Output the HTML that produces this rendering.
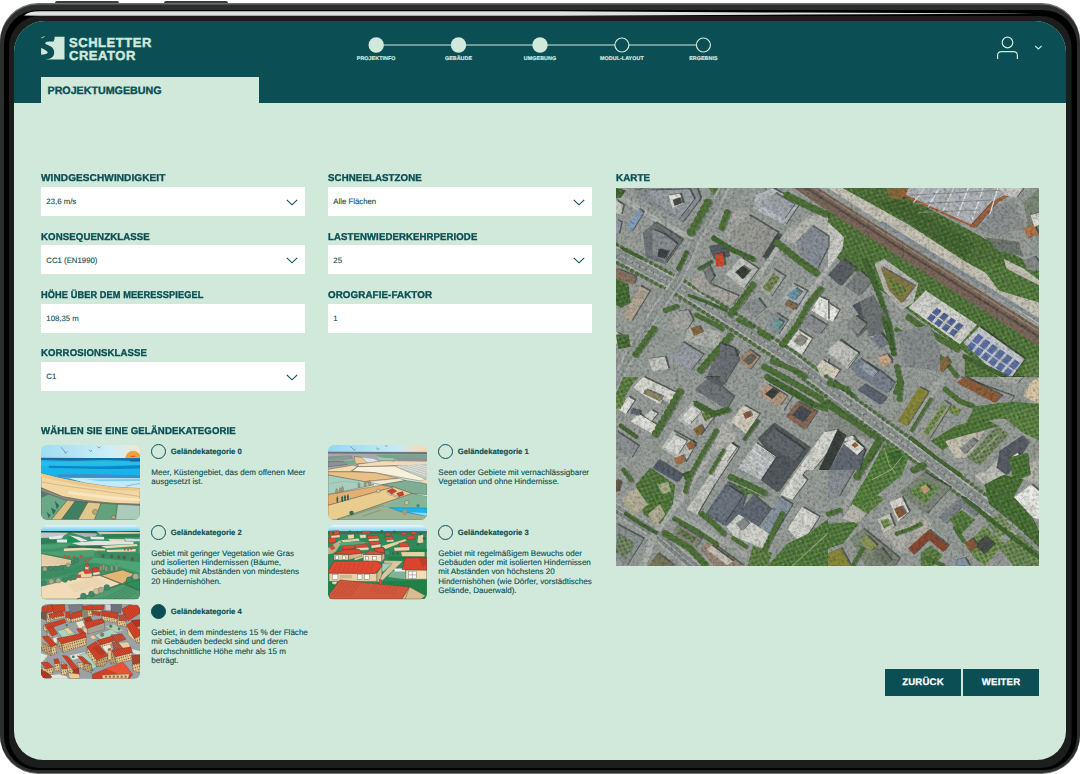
<!DOCTYPE html>
<html lang="de">
<head>
<meta charset="utf-8">
<title>Schletter Creator – Projektumgebung</title>
<style>
html,body{margin:0;padding:0;background:#fff;}
body{width:1080px;height:774px;position:relative;overflow:hidden;font-family:"Liberation Sans",sans-serif;color:#0b4f55;text-rendering:geometricPrecision;}
#frame{position:absolute;left:0;top:0;width:1080px;height:774px;}
#screen{position:absolute;left:14px;top:21px;width:1052px;height:739px;border-radius:31px 31px 29px 29px;background:#d0e9da;overflow:hidden;}
#hdr{position:absolute;left:0;top:0;width:1052px;height:81.7px;background:#0b4f55;}
.abs{position:absolute;white-space:nowrap;}
#tab{position:absolute;left:27px;top:56px;width:218px;height:27px;background:#d0e9da;}
.h{position:absolute;white-space:nowrap;font-weight:bold;font-size:9.9px;line-height:12px;letter-spacing:0.1px;color:#0b4f55;-webkit-text-stroke:0.35px #0b4f55;transform-origin:0 50%;}
.box{position:absolute;width:264px;height:29.2px;background:#fff;}
.box span{position:absolute;left:5.3px;top:10.4px;font-size:7.8px;line-height:10px;white-space:nowrap;color:#0b4f55;-webkit-text-stroke:0.1px #0b4f55;}
.box svg{position:absolute;left:245px;top:12px;}
.rad{position:absolute;width:13px;height:13px;border:0.9px solid #0b4f55;border-radius:50%;}
.rad.on{background:#0b4f55;}
.rl{position:absolute;white-space:nowrap;font-weight:bold;font-size:7.7px;line-height:10px;color:#0b4f55;-webkit-text-stroke:0.15px #0b4f55;}
.rd{position:absolute;font-size:8.05px;line-height:9.4px;color:#0b4f55;white-space:nowrap;-webkit-text-stroke:0.12px #0b4f55;}
.timg{position:absolute;width:99px;height:74.5px;border-radius:6px;overflow:hidden;}
.timg svg{display:block;}
.btn{position:absolute;top:648px;height:27px;width:76px;background:#0b4f55;color:#fff;font-weight:bold;font-size:9.6px;line-height:28.6px;text-align:center;letter-spacing:0.2px;-webkit-text-stroke:0.25px #fff;}
.st{position:absolute;top:35.3px;font-weight:bold;font-size:5.3px;line-height:7px;color:#d0e9da;white-space:nowrap;transform:translateX(-50%);letter-spacing:0.1px;-webkit-text-stroke:0.2px #d0e9da;}
</style>
</head>
<body>
<svg id="frame" viewBox="0 0 1080 774">
  <rect x="55" y="1" width="64" height="5" rx="2" fill="#3a3c3c"/>
  <rect x="164" y="1" width="64" height="5" rx="2" fill="#3a3c3c"/>
  <rect x="0" y="3" width="1080" height="771" rx="38" ry="38" fill="#707272"/>
  <rect x="0" y="4.5" width="1080" height="768.5" rx="38" ry="38" fill="#2c2e2e"/>
  <rect x="4" y="10" width="1073" height="760" rx="34" ry="34" fill="#000"/>
  <rect x="9" y="16" width="1062.500" height="752" rx="31" ry="31" fill="#1c1e1e"/>
  <path d="M24 15.500 Q28 11.200 40 11.200 L560 11.200 L800 12.600 L1034 13.600 L800 14.600 L560 15.800 L40 15.800 Z" fill="#dfe1e0"/>
</svg>
<div id="screen">
  <div id="hdr"></div>
  <div id="tab"></div>
  <svg class="abs" style="left:27px;top:15px" width="24" height="24" viewBox="0 0 24 24">
    <path d="M13.600 0.800 L23.500 0.800 L23.500 23.500 L4.500 23.500 C8.500 23 11.500 22 12.600 19.500 C13.800 16.500 13.200 13.500 11 11.300 C9 9.500 6.500 9 5 8.200 C4 7.600 4 6.800 5 6.200 C7 5.200 10.500 5.500 12.400 5.700 L13.600 2.600 Z" fill="#d0e9da"/>
    <path d="M0.200 1.800 C1.200 0.800 2.600 0.300 3.900 0.200 L3.600 1 C2.400 1.200 1.200 1.800 0.300 2.600 Z" fill="#d0e9da"/>
    <path d="M0.100 12.100 C2.500 12.800 5.500 14.500 6.800 16.300 C6.500 17.800 3 18.800 0.100 18.700 Z" fill="#d0e9da"/>
  </svg>
  <div class="abs" style="left:55px;top:15.600px;font-weight:bold;font-size:13.000px;line-height:12.500px;color:#d0e9da;letter-spacing:0.540px;-webkit-text-stroke:0.450px #d0e9da">SCHLETTER</div>
  <div class="abs" style="left:55px;top:28.800px;font-weight:bold;font-size:13.000px;line-height:12.500px;color:#d0e9da;letter-spacing:0.540px;-webkit-text-stroke:0.450px #d0e9da">CREATOR</div>
  <div class="abs" style="left:33.500px;top:64.100px;font-weight:bold;font-size:10.700px;line-height:13px;color:#0b4f55;-webkit-text-stroke:0.350px #0b4f55">PROJEKTUMGEBUNG</div>
  <svg class="abs" style="left:340px;top:10px" width="380" height="30" viewBox="340 10 380 30">
    <path d="M362 24 H689" stroke="#d0e9da" stroke-width="1" fill="none"/>
    <circle cx="362.200" cy="24" r="7.700" fill="#d0e9da"/>
    <circle cx="444.500" cy="24" r="7.700" fill="#d0e9da"/>
    <circle cx="526" cy="24" r="7.700" fill="#d0e9da"/>
    <circle cx="607.900" cy="24" r="7" fill="#0b4f55" stroke="#d0e9da" stroke-width="1.200"/>
    <circle cx="689.400" cy="24" r="7" fill="#0b4f55" stroke="#d0e9da" stroke-width="1.200"/>
  </svg>
  <div class="st" style="left:362.200px">PROJEKTINFO</div>
  <div class="st" style="left:444.500px">GEBÄUDE</div>
  <div class="st" style="left:526px">UMGEBUNG</div>
  <div class="st" style="left:607.900px">MODUL-LAYOUT</div>
  <div class="st" style="left:689.400px">ERGEBNIS</div>
  <svg class="abs" style="left:978px;top:10px" width="60" height="34" viewBox="978 10 60 34">
    <circle cx="993.500" cy="21.500" r="5.300" fill="none" stroke="#d0e9da" stroke-width="1.200"/>
    <path d="M983.600 38 V34.500 Q983.600 30.600 987.500 30.600 H999.500 Q1003.400 30.600 1003.400 34.500 V38" fill="none" stroke="#d0e9da" stroke-width="1.200"/>
    <path d="M1021.200 25 L1024.400 28 L1027.600 25" fill="none" stroke="#d0e9da" stroke-width="1.100"/>
  </svg>
  <div class="h" style="left:27px;top:152.00px;transform:scaleX(1.0155)">WINDGESCHWINDIGKEIT</div>
  <div class="box" style="left:27px;top:166px"><span>23,6 m/s</span><svg width="12" height="7" viewBox="0 0 12 7"><path d="M0.800 0.800 L6 5.800 L11.200 0.800" fill="none" stroke="#0b4f55" stroke-width="1.100"/></svg></div>
  <div class="h" style="left:314px;top:152.00px;transform:scaleX(0.9804)">SCHNEELASTZONE</div>
  <div class="box" style="left:314px;top:166px"><span>Alle Flächen</span><svg width="12" height="7" viewBox="0 0 12 7"><path d="M0.800 0.800 L6 5.800 L11.200 0.800" fill="none" stroke="#0b4f55" stroke-width="1.100"/></svg></div>
  <div class="h" style="left:27px;top:210.90px;transform:scaleX(0.9781)">KONSEQUENZKLASSE</div>
  <div class="box" style="left:27px;top:224.3px"><span>CC1 (EN1990)</span><svg width="12" height="7" viewBox="0 0 12 7"><path d="M0.800 0.800 L6 5.800 L11.200 0.800" fill="none" stroke="#0b4f55" stroke-width="1.100"/></svg></div>
  <div class="h" style="left:314px;top:210.90px;transform:scaleX(0.9718)">LASTENWIEDERKEHRPERIODE</div>
  <div class="box" style="left:314px;top:224.3px"><span>25</span><svg width="12" height="7" viewBox="0 0 12 7"><path d="M0.800 0.800 L6 5.800 L11.200 0.800" fill="none" stroke="#0b4f55" stroke-width="1.100"/></svg></div>
  <div class="h" style="left:27px;top:268.60px;transform:scaleX(0.9344)">HÖHE ÜBER DEM MEERESSPIEGEL</div>
  <div class="box" style="left:27px;top:282.6px"><span>108,35 m</span></div>
  <div class="h" style="left:314px;top:268.60px;transform:scaleX(0.9904)">OROGRAFIE-FAKTOR</div>
  <div class="box" style="left:314px;top:282.6px"><span>1</span></div>
  <div class="h" style="left:27px;top:327.10px;transform:scaleX(0.9712)">KORROSIONSKLASSE</div>
  <div class="box" style="left:27px;top:341.1px"><span>C1</span><svg width="12" height="7" viewBox="0 0 12 7"><path d="M0.800 0.800 L6 5.800 L11.200 0.800" fill="none" stroke="#0b4f55" stroke-width="1.100"/></svg></div>
  <div class="h" style="left:602px;top:152.00px;transform:scaleX(0.9909)">KARTE</div>
  <div id="map" class="abs" style="left:602px;top:167px;width:423px;height:378px;background:#7f8b7c;overflow:hidden"><svg width="423" height="378" viewBox="0 0 423 378" style="display:block"><defs><pattern id="tp" width="6.4" height="5.6" patternUnits="userSpaceOnUse" patternTransform="rotate(24)"><circle cx="1.7" cy="1.6" r="1.7" fill="#34542a" opacity="0.5"/><circle cx="4.9" cy="4.3" r="1.5" fill="#2f4f27" opacity="0.45"/><circle cx="5.2" cy="1.2" r="0.9" fill="#7fa055" opacity="0.5"/></pattern><filter id="mb" x="-2%" y="-2%" width="104%" height="104%"><feGaussianBlur stdDeviation="0.7"/></filter><filter id="mn" x="0" y="0" width="100%" height="100%"><feTurbulence type="fractalNoise" baseFrequency="0.35" numOctaves="3" seed="7" result="n"/><feColorMatrix type="matrix" values="0 0 0 0 0  0 0 0 0 0  0 0 0 0 0  1.1 1.1 0 0 -0.95"/></filter><filter id="mn2" x="0" y="0" width="100%" height="100%"><feTurbulence type="fractalNoise" baseFrequency="0.09" numOctaves="3" seed="3"/><feColorMatrix type="matrix" values="0 0 0 0 0.12  0 0 0 0 0.15  0 0 0 0 0.12  1.8 0 0 0 -0.82"/></filter></defs><rect width="423" height="378" fill="#9ba09c"/><g filter="url(#mb)"><polygon points="0.0,0.0 212.0,0.0 212.0,189.1 0.0,189.1" fill="#9ba09c"/><polygon points="212.0,0.0 424.0,0.0 424.0,189.1 212.0,189.1" fill="#9ba09c"/><polygon points="0.0,189.0 212.0,189.0 212.0,378.1 0.0,378.1" fill="#9ba09c"/><polygon points="212.0,189.0 424.0,189.0 424.0,378.1 212.0,378.1" fill="#9ba09c"/><polygon points="212.0,14.7 424.0,158.8 424.0,189.1 383.0,189.1 212.0,63.5" fill="#5a8040"/><polygon points="212.0,14.7 424.0,158.8 424.0,189.1 383.0,189.1 212.0,63.5" fill="url(#tp)"/><polygon points="192.5,0.0 241.3,0.0 424.0,114.8 424.0,136.8 212.0,0.0" fill="#c9c6b9"/><polygon points="177.8,0.0 202.2,0.0 424.0,140.4 424.0,158.8 212.0,23.2" fill="#7c695b"/><polyline points="190.0,0.0 424.0,149.5" fill="none" stroke="#5f5048" stroke-width="2.4" stroke-linecap="butt"/><polyline points="197.3,0.0 424.0,144.1" fill="none" stroke="#9a8a7c" stroke-width="1.2" stroke-linecap="butt"/><polygon points="226.7,0.0 275.5,0.0 424.0,80.6 424.0,114.8 348.8,73.3 292.6,36.6" fill="#55793c"/><polygon points="226.7,0.0 275.5,0.0 424.0,80.6 424.0,114.8 348.8,73.3 292.6,36.6" fill="url(#tp)"/><polygon points="260.9,14.7 285.3,9.8 358.6,56.2 348.8,70.8" fill="#486c34"/><polygon points="260.9,14.7 285.3,9.8 358.6,56.2 348.8,70.8" fill="url(#tp)"/><polygon points="361.0,73.3 424.0,80.6 424.0,114.8 383.0,102.6" fill="#5c8642"/><polygon points="361.0,73.3 424.0,80.6 424.0,114.8 383.0,102.6" fill="url(#tp)"/><polyline points="264.5,34.2 339.0,80.6 424.0,133.1" fill="none" stroke="#8d949c" stroke-width="3.9" stroke-linecap="butt"/><polygon points="272.4,-0.9 294.4,-0.9 287.1,11.3 274.9,8.9" fill="#2d3431" opacity="0.6"/><polygon points="270.6,0.0 292.6,0.0 285.3,12.2 273.1,9.8" fill="#8a6a3c"/><polygon points="287.1,6.4 294.4,-0.9 409.2,-0.9 382.3,13.8 360.4,39.4" fill="#2d3431" opacity="0.6"/><polygon points="285.3,7.3 292.6,0.0 407.4,0.0 380.5,14.7 358.6,40.3" fill="#a8623c"/><polygon points="294.4,-0.9 404.3,-0.9 377.9,12.5 356.7,35.7 291.5,5.9" fill="#2d3431" opacity="0.6"/><polygon points="292.6,0.0 402.5,0.0 376.1,13.4 354.9,36.6 289.7,6.8" fill="#b3b7bb"/><polyline points="308.5,0.0 297.5,14.7" fill="none" stroke="#e4e6e6" stroke-width="1.2" stroke-linecap="butt"/><polyline points="323.1,0.0 312.1,19.1" fill="none" stroke="#e4e6e6" stroke-width="1.2" stroke-linecap="butt"/><polyline points="337.8,0.0 326.8,23.4" fill="none" stroke="#e4e6e6" stroke-width="1.2" stroke-linecap="butt"/><polyline points="352.4,0.0 341.5,27.8" fill="none" stroke="#e4e6e6" stroke-width="1.2" stroke-linecap="butt"/><polyline points="367.1,0.0 356.1,32.2" fill="none" stroke="#e4e6e6" stroke-width="1.2" stroke-linecap="butt"/><polyline points="381.8,0.0 370.8,36.6" fill="none" stroke="#e4e6e6" stroke-width="1.2" stroke-linecap="butt"/><polyline points="292.6,7.3 383.0,2.4" fill="none" stroke="#8d9197" stroke-width="1.0" stroke-linecap="butt"/><polyline points="297.5,15.9 373.2,12.2" fill="none" stroke="#8d9197" stroke-width="1.0" stroke-linecap="butt"/><polyline points="302.4,24.4 363.4,22.0" fill="none" stroke="#8d9197" stroke-width="1.0" stroke-linecap="butt"/><polygon points="363.4,41.5 380.5,17.1 397.6,12.2 407.4,36.6 383.0,48.9" fill="#8f9292"/><polygon points="384.8,-0.9 409.2,-0.9 401.9,8.9 389.7,6.4" fill="#2d3431" opacity="0.6"/><polygon points="383.0,0.0 407.4,0.0 400.1,9.8 387.9,7.3" fill="#c9c9c4"/><polygon points="409.2,13.8 425.8,-0.9 425.8,45.5 416.5,48.0" fill="#2d3431" opacity="0.6"/><polygon points="407.4,14.7 424.0,0.0 424.0,46.4 414.7,48.9" fill="#7f8a78"/><polygon points="409.2,39.4 419.0,35.7 423.9,44.3 414.1,49.2" fill="#2d3431" opacity="0.6"/><polygon points="407.4,40.3 417.2,36.6 422.1,45.2 412.3,50.1" fill="#b5764a"/><polygon points="416.5,26.0 425.8,23.5 425.8,35.7 420.2,38.2" fill="#2d3431" opacity="0.6"/><polygon points="414.7,26.9 424.0,24.4 424.0,36.6 418.4,39.1" fill="#e0e0da"/><polygon points="409.2,72.4 420.2,67.5 425.8,74.8 425.8,82.1 414.1,80.9" fill="#2d3431" opacity="0.6"/><polygon points="407.4,73.3 418.4,68.4 424.0,75.7 424.0,83.0 412.3,81.8" fill="#8b8f8f"/><polygon points="387.9,70.8 407.4,80.6 424.0,92.8 424.0,97.7 390.3,80.6" fill="#c9c6b9"/><polygon points="368.3,48.9 402.5,53.7 407.4,68.4 383.0,63.5" fill="#6f7a70"/><polygon points="212.0,34.2 227.9,48.9 226.7,61.1 212.0,80.6" fill="#d3d3cd"/><polygon points="213.8,85.8 228.5,69.9 241.9,79.7 226.5,97.3" fill="#2d3431" opacity="0.6"/><polygon points="212.0,86.7 226.7,70.8 240.1,80.6 224.7,98.2" fill="#5a6064"/><polygon points="230.9,97.3 245.6,82.1 258.3,91.9 244.6,107.1" fill="#2d3431" opacity="0.6"/><polygon points="229.1,98.2 243.8,83.0 256.5,92.8 242.8,108.0" fill="#7b8081"/><polygon points="212.0,102.6 226.7,107.5 236.4,117.2 221.8,136.8 212.0,136.8" fill="#a4a7a4"/><polygon points="213.8,113.9 225.0,121.2 218.7,132.5 213.8,130.0" fill="#2d3431" opacity="0.6"/><polygon points="212.0,114.8 223.2,122.1 216.9,133.4 212.0,130.9" fill="#ecece8"/><polyline points="249.9,74.0 264.5,108.2 274.3,137.5 279.2,169.3" fill="none" stroke="#2c4424" stroke-width="5.6" stroke-linecap="round" opacity="0.45" stroke-dasharray="0.1 4.3"/><polyline points="248.6,73.3 263.3,107.5 273.1,136.8 278.0,168.5" fill="none" stroke="#456733" stroke-width="5.4" stroke-linecap="round" stroke-dasharray="0.1 4.3"/><polygon points="258.4,75.7 268.2,70.8 302.4,95.3 297.5,114.8 285.3,122.1 268.2,102.6" fill="#b9bab4"/><polygon points="266.3,77.8 300.5,97.3 287.1,114.4 274.9,101.7" fill="#2d3431" opacity="0.6"/><polygon points="264.5,78.7 298.7,98.2 285.3,115.3 273.1,102.6" fill="#8a7a45"/><polygon points="270.6,87.9 292.6,100.1 285.3,109.9 276.0,102.6" fill="#7a8a48"/><polygon points="270.6,87.9 292.6,100.1 285.3,109.9 276.0,102.6" fill="url(#tp)"/><polygon points="292.6,119.7 309.7,102.6 361.0,136.8 343.9,156.3" fill="#d6d6d1"/><polygon points="315.8,124.6 320.7,119.7 325.6,122.9 320.7,128.2" fill="#56699a"/><polygon points="310.9,130.7 315.1,125.8 320.0,129.0 315.8,134.3" fill="#56699a"/><polygon points="323.1,129.5 328.0,124.6 332.9,127.7 328.0,133.1" fill="#56699a"/><polygon points="318.3,135.6 322.4,130.7 327.3,133.9 323.1,139.2" fill="#56699a"/><polygon points="330.5,134.3 335.4,129.5 340.2,132.6 335.4,138.0" fill="#56699a"/><polygon points="325.6,140.4 329.7,135.6 334.6,138.7 330.5,144.1" fill="#56699a"/><polygon points="337.8,139.2 342.7,134.3 347.6,137.5 342.7,142.9" fill="#56699a"/><polygon points="332.9,145.3 337.1,140.4 341.9,143.6 337.8,149.0" fill="#56699a"/><polygon points="349.4,153.5 365.2,137.8 410.4,170.1 397.5,188.2 384.8,188.2" fill="#2d3431" opacity="0.6"/><polygon points="347.6,154.4 363.4,138.7 408.6,171.0 395.7,189.1 383.0,189.1" fill="#c6cad0"/><polygon points="356.1,152.7 362.2,145.8 367.3,149.2 361.5,156.3" fill="#5d72a6"/><polygon points="350.3,159.3 355.1,153.9 360.3,157.3 355.6,163.2" fill="#5d72a6"/><polygon points="363.4,157.8 369.5,151.0 374.7,154.4 368.8,161.5" fill="#5d72a6"/><polygon points="357.6,164.4 362.5,159.0 367.6,162.4 363.0,168.3" fill="#5d72a6"/><polygon points="370.8,162.9 376.9,156.1 382.0,159.5 376.1,166.6" fill="#5d72a6"/><polygon points="364.9,169.5 369.8,164.1 374.9,167.6 370.3,173.4" fill="#5d72a6"/><polygon points="378.1,168.1 384.2,161.2 389.3,164.6 383.5,171.7" fill="#5d72a6"/><polygon points="372.2,174.6 377.1,169.3 382.2,172.7 377.6,178.6" fill="#5d72a6"/><polygon points="385.4,173.2 391.5,166.3 396.7,169.8 390.8,176.8" fill="#5d72a6"/><polygon points="379.6,179.8 384.4,174.4 389.6,177.8 384.9,183.7" fill="#5d72a6"/><polygon points="392.8,178.3 398.9,171.5 404.0,174.9 398.1,182.0" fill="#5d72a6"/><polygon points="386.9,184.9 391.8,179.5 396.9,183.0 392.3,188.8" fill="#5d72a6"/><polyline points="293.9,130.2 318.3,147.3 342.7,162.0" fill="none" stroke="#2c4424" stroke-width="6.7" stroke-linecap="round" opacity="0.45" stroke-dasharray="0.1 5.1"/><polyline points="292.6,129.5 317.0,146.6 341.5,161.2" fill="none" stroke="#4f7239" stroke-width="6.4" stroke-linecap="round" stroke-dasharray="0.1 5.1"/><polyline points="281.6,142.4 306.1,157.1 328.1,171.7 342.7,189.8" fill="none" stroke="#2c4424" stroke-width="5.1" stroke-linecap="round" opacity="0.45" stroke-dasharray="0.1 3.9"/><polyline points="280.4,141.7 304.8,156.3 326.8,171.0 341.5,189.1" fill="none" stroke="#4f7239" stroke-width="4.9" stroke-linecap="round" stroke-dasharray="0.1 3.9"/><polygon points="234.6,135.9 243.1,126.1 253.4,137.4 243.6,148.6" fill="#2d3431" opacity="0.6"/><polygon points="232.8,136.8 241.3,127.0 251.6,138.3 241.8,149.5" fill="#6f7473"/><polygon points="238.2,116.3 255.3,109.0 262.7,121.2 248.0,131.0" fill="#2d3431" opacity="0.6"/><polygon points="236.4,117.2 253.5,109.9 260.9,122.1 246.2,131.9" fill="#555a5f"/><polygon points="256.5,150.5 266.3,143.2 275.4,153.5 265.6,160.8" fill="#2d3431" opacity="0.6"/><polygon points="254.7,151.4 264.5,144.1 273.6,154.4 263.8,161.7" fill="#8a9199"/><polygon points="213.8,160.8 226.0,150.5 244.6,165.2 233.3,180.3" fill="#2d3431" opacity="0.6"/><polygon points="212.0,161.7 224.2,151.4 242.8,166.1 231.5,181.2" fill="#c8c8c0"/><polygon points="262.7,168.1 271.4,165.2 277.8,174.0 269.0,177.9" fill="#2d3431" opacity="0.6"/><polygon points="260.9,169.0 269.6,166.1 276.0,174.9 267.2,178.8" fill="#c4a98b"/><polygon points="303.0,158.4 312.0,153.0 319.3,160.8 310.5,167.2" fill="#2d3431" opacity="0.6"/><polygon points="301.2,159.3 310.2,153.9 317.5,161.7 308.7,168.1" fill="#7a6a3f"/><polygon points="322.5,175.5 331.5,167.6 336.4,174.0 327.6,184.0" fill="#2d3431" opacity="0.6"/><polygon points="320.7,176.4 329.7,168.5 334.6,174.9 325.8,184.9" fill="#8a6a3f"/><polygon points="348.8,171.0 368.3,180.8 383.0,189.1 348.8,189.1" fill="#5a8040"/><polygon points="348.8,171.0 368.3,180.8 383.0,189.1 348.8,189.1" fill="url(#tp)"/><polyline points="350.0,169.3 369.6,179.1 391.6,189.8" fill="none" stroke="#2c4424" stroke-width="5.1" stroke-linecap="round" opacity="0.45" stroke-dasharray="0.1 3.9"/><polyline points="348.8,168.5 368.3,178.3 390.3,189.1" fill="none" stroke="#456733" stroke-width="4.9" stroke-linecap="round" stroke-dasharray="0.1 3.9"/><polygon points="409.9,171.0 424.0,168.5 424.0,189.1 407.4,189.1" fill="#688c4a"/><polygon points="409.9,171.0 424.0,168.5 424.0,189.1 407.4,189.1" fill="url(#tp)"/><polyline points="-2.4,4.9 36.6,29.3 73.3,48.9" fill="none" stroke="#b3b6b2" stroke-width="4.9" stroke-linecap="butt"/><polyline points="117.2,127.0 136.8,97.7 166.1,52.5 175.9,39.1" fill="none" stroke="#b3b6b2" stroke-width="4.4" stroke-linecap="butt"/><polyline points="156.3,156.3 185.6,114.8 212.0,80.6" fill="none" stroke="#b3b6b2" stroke-width="4.4" stroke-linecap="butt"/><polyline points="97.7,22.0 136.8,48.9 171.0,73.3" fill="none" stroke="#b3b6b2" stroke-width="3.4" stroke-linecap="butt" opacity="0.6"/><polyline points="-4.0,63.0 61.0,97.7 114.8,131.9 171.0,168.5 228.0,212.0 285.3,253.7 348.8,301.4 428.0,360.0" fill="none" stroke="#b6b9b6" stroke-width="13.5" stroke-linecap="butt"/><polyline points="-4.0,63.0 61.0,97.7 114.8,131.9 171.0,168.5 228.0,212.0 285.3,253.7 348.8,301.4 428.0,360.0" fill="none" stroke="#8f9594" stroke-width="9.5" stroke-linecap="butt"/><polyline points="-4.0,63.0 61.0,97.7 114.8,131.9 171.0,168.5 228.0,212.0 285.3,253.7 348.8,301.4 428.0,360.0" fill="none" stroke="#a9ada4" stroke-width="1.6" stroke-linecap="butt"/><polyline points="-1.4,59.4 63.6,94.1 117.4,128.3 173.6,164.9 230.6,208.4 287.9,250.1 351.4,297.8 430.6,356.4" fill="none" stroke="#9da2a0" stroke-width="0.7" stroke-linecap="butt" stroke-dasharray="3 2"/><polyline points="-6.6,66.6 58.4,101.3 112.2,135.5 168.4,172.1 225.4,215.6 282.7,257.3 346.2,305.0 425.4,363.6" fill="none" stroke="#9da2a0" stroke-width="0.7" stroke-linecap="butt" stroke-dasharray="3 2"/><polyline points="-4.0,63.0 61.0,97.7 114.8,131.9 171.0,168.5 228.0,212.0 285.3,253.7 348.8,301.4 428.0,360.0" fill="none" stroke="#3a4040" stroke-width="2.0" stroke-linecap="butt" opacity="0.55" stroke-dasharray="1.2 6.5"/><polyline points="1.8,57.1 66.8,91.9 120.6,126.1 176.8,162.7 233.8,206.2 291.2,247.8 354.7,295.5 433.9,354.1" fill="none" stroke="#2c4424" stroke-width="3.8" stroke-linecap="round" opacity="0.45" stroke-dasharray="0.1 5.4"/><polyline points="0.6,56.4 65.6,91.1 119.4,125.3 175.6,161.9 232.6,205.4 289.9,247.1 353.4,294.8 432.6,353.4" fill="none" stroke="#4f7239" stroke-width="3.6" stroke-linecap="round" stroke-dasharray="0.1 5.4"/><polyline points="-7.3,70.3 57.6,105.0 111.5,139.2 167.7,175.8 224.7,219.3 281.9,261.1 345.4,308.8 424.6,367.4" fill="none" stroke="#2c4424" stroke-width="3.8" stroke-linecap="round" opacity="0.45" stroke-dasharray="0.1 5.4"/><polyline points="-8.6,69.6 56.4,104.3 110.2,138.5 166.4,175.1 223.4,218.6 280.7,260.3 344.2,308.0 423.4,366.6" fill="none" stroke="#4f7239" stroke-width="3.6" stroke-linecap="round" stroke-dasharray="0.1 5.4"/><polyline points="108.7,-3.0 97.7,22.0 80.6,48.9 62.3,91.6 44.0,117.2 22.0,151.4 2.4,189.0 -6.0,205.0" fill="none" stroke="#aeb1ae" stroke-width="10.5" stroke-linecap="butt"/><polyline points="108.7,-3.0 97.7,22.0 80.6,48.9 62.3,91.6 44.0,117.2 22.0,151.4 2.4,189.0 -6.0,205.0" fill="none" stroke="#929897" stroke-width="6.5" stroke-linecap="butt"/><polyline points="108.7,-3.0 97.7,22.0 80.6,48.9 62.3,91.6 44.0,117.2 22.0,151.4 2.4,189.0 -6.0,205.0" fill="none" stroke="#a9ada4" stroke-width="0.8" stroke-linecap="butt"/><polyline points="-3.0,319.0 39.0,345.0 81.0,381.0" fill="none" stroke="#aeb1ae" stroke-width="12.0" stroke-linecap="butt"/><polyline points="-3.0,319.0 39.0,345.0 81.0,381.0" fill="none" stroke="#858b8b" stroke-width="8.0" stroke-linecap="butt"/><polyline points="-3.0,319.0 39.0,345.0 81.0,381.0" fill="none" stroke="#a9ada4" stroke-width="1.2" stroke-linecap="butt"/><polygon points="105.0,41.5 122.1,19.5 136.8,26.9 117.2,53.7" fill="#a9aba7"/><polygon points="73.3,136.8 105.0,144.1 102.6,161.2 80.6,156.3 68.4,151.4" fill="#b3b5b0"/><polygon points="7.3,56.2 24.4,34.2 39.1,41.5 29.3,63.5 14.7,61.1" fill="#9fa29f"/><polygon points="168.5,51.3 193.0,26.9 212.0,24.4 212.0,48.9 180.8,58.6" fill="#b7b8b2"/><polygon points="18.9,2.0 31.1,-0.9 82.4,-0.9 86.3,9.4 68.2,33.8 29.2,11.8" fill="#2d3431" opacity="0.6"/><polygon points="17.1,2.9 29.3,0.0 80.6,0.0 84.5,10.3 66.4,34.7 27.4,12.7" fill="#8d9397"/><polygon points="33.6,1.5 75.1,0.3 80.0,10.1 65.8,28.4 38.4,12.5" fill="#2d3431" opacity="0.6"/><polygon points="31.8,2.4 73.3,1.2 78.2,11.0 64.0,29.3 36.6,13.4" fill="#9ba1a5"/><polygon points="54.3,6.4 65.8,4.5 69.0,14.2 58.5,19.1" fill="#2d3431" opacity="0.6"/><polygon points="52.5,7.3 64.0,5.4 67.2,15.1 56.7,20.0" fill="#e6e4dc"/><polygon points="58.5,10.8 65.8,8.9 67.8,14.2 60.4,17.2" fill="#2d3431" opacity="0.6"/><polygon points="56.7,11.7 64.0,9.8 66.0,15.1 58.6,18.1" fill="#4a4d4c"/><polygon points="1.8,11.3 9.1,16.2 6.7,26.0 1.8,24.7" fill="#2d3431" opacity="0.6"/><polygon points="0.0,12.2 7.3,17.1 4.9,26.9 0.0,25.6" fill="#cfd0cc"/><polygon points="11.6,38.2 24.3,19.6 29.2,23.5 16.9,43.6" fill="#2d3431" opacity="0.6"/><polygon points="9.8,39.1 22.5,20.5 27.4,24.4 15.1,44.5" fill="#8aa6c2"/><polygon points="1.8,30.9 7.2,33.3 4.2,45.5 1.8,44.3" fill="#2d3431" opacity="0.6"/><polygon points="0.0,31.8 5.4,34.2 2.4,46.4 0.0,45.2" fill="#9aa3ac"/><polygon points="28.7,43.6 40.9,33.3 68.2,50.9 51.1,75.3 31.6,68.0" fill="#2d3431" opacity="0.6"/><polygon points="26.9,44.5 39.1,34.2 66.4,51.8 49.3,76.2 29.8,68.9" fill="#71777a"/><polygon points="38.4,40.6 50.7,45.5 62.9,55.3 50.7,72.4 38.4,65.1" fill="#2d3431" opacity="0.6"/><polygon points="36.6,41.5 48.9,46.4 61.1,56.2 48.9,73.3 36.6,66.0" fill="#8b9093"/><polygon points="44.5,60.2 54.3,62.6 50.7,69.9 43.3,67.5" fill="#2d3431" opacity="0.6"/><polygon points="42.7,61.1 52.5,63.5 48.9,70.8 41.5,68.4" fill="#3d4242"/><polygon points="138.6,19.1 141.5,6.4 158.1,-0.9 185.5,14.2 170.8,36.2" fill="#2d3431" opacity="0.6"/><polygon points="136.8,20.0 139.7,7.3 156.3,0.0 183.7,15.1 169.0,37.1" fill="#b9bfc4"/><polygon points="145.9,13.8 160.6,4.0 180.1,15.7 169.1,30.9" fill="#2d3431" opacity="0.6"/><polygon points="144.1,14.7 158.8,4.9 178.3,16.6 167.3,31.8" fill="#a3a9ae"/><polygon points="116.6,43.6 134.2,26.0 163.5,43.6 148.8,68.0 119.5,53.3" fill="#2d3431" opacity="0.6"/><polygon points="114.8,44.5 132.4,26.9 161.7,44.5 147.0,68.9 117.7,54.2" fill="#9b9c97"/><polygon points="148.4,67.5 163.0,44.3 166.7,46.7 152.0,70.4" fill="#2d3431" opacity="0.6"/><polygon points="146.6,68.4 161.2,45.2 164.9,47.6 150.2,71.3" fill="#4a4f4c"/><polygon points="181.3,53.3 197.7,37.0 213.8,47.5 213.8,58.2 202.6,80.2 187.9,70.4" fill="#2d3431" opacity="0.6"/><polygon points="179.5,54.2 195.9,37.9 212.0,48.4 212.0,59.1 200.8,81.1 186.1,71.3" fill="#8a9199"/><polygon points="94.6,57.7 109.8,54.8 114.6,68.0 100.0,70.4" fill="#2d3431" opacity="0.6"/><polygon points="92.8,58.6 108.0,55.7 112.8,68.9 98.2,71.3" fill="#596066"/><polygon points="100.7,65.5 108.8,64.1 110.5,76.8 102.4,78.2" fill="#2d3431" opacity="0.6"/><polygon points="98.9,66.4 107.0,65.0 108.7,77.7 100.6,79.1" fill="#d8492b"/><polygon points="111.7,85.1 126.9,68.7 144.0,80.2 129.3,99.7" fill="#2d3431" opacity="0.6"/><polygon points="109.9,86.0 125.1,69.6 142.2,81.1 127.5,100.6" fill="#c5c7c3"/><polygon points="121.0,83.4 128.3,76.8 135.7,82.1 128.8,90.0" fill="#2d3431" opacity="0.6"/><polygon points="119.2,84.3 126.5,77.7 133.9,83.0 127.0,90.9" fill="#3b403b"/><polygon points="75.1,92.4 87.8,79.7 100.0,87.5 95.1,94.8 124.4,107.1 117.1,116.8 85.3,102.2" fill="#2d3431" opacity="0.6"/><polygon points="73.3,93.3 86.0,80.6 98.2,88.4 93.3,95.7 122.6,108.0 115.3,117.7 83.5,103.1" fill="#a9a8a1"/><polygon points="87.8,79.7 94.6,76.0 100.0,87.5 94.6,94.8" fill="#2d3431" opacity="0.6"/><polygon points="86.0,80.6 92.8,76.9 98.2,88.4 92.8,95.7" fill="#7d8080"/><polygon points="130.0,116.8 144.0,109.0 151.3,119.3 139.1,129.0" fill="#2d3431" opacity="0.6"/><polygon points="128.2,117.7 142.2,109.9 149.5,120.2 137.3,129.9" fill="#8d9295"/><polygon points="143.5,99.7 158.6,79.7 170.8,87.5 156.2,108.3" fill="#2d3431" opacity="0.6"/><polygon points="141.7,100.6 156.8,80.6 169.0,88.4 154.4,109.2" fill="#a8ada4"/><polygon points="146.6,99.7 157.5,85.5 164.1,89.9 153.4,104.5" fill="#80905f"/><polygon points="146.6,99.7 157.5,85.5 164.1,89.9 153.4,104.5" fill="url(#tp)"/><polygon points="165.5,114.4 178.2,94.4 192.8,102.2 180.6,121.7" fill="#2d3431" opacity="0.6"/><polygon points="163.7,115.3 176.4,95.3 191.0,103.1 178.8,122.6" fill="#b0b5b9"/><polygon points="170.3,115.9 172.8,111.0 182.6,116.3 179.6,121.2" fill="#2d3431" opacity="0.6"/><polygon points="168.5,116.8 171.0,111.9 180.8,117.2 177.8,122.1" fill="#8a6a50"/><polygon points="172.8,106.6 181.3,99.2 187.4,103.6 179.6,111.9" fill="#2d3431" opacity="0.6"/><polygon points="171.0,107.5 179.5,100.1 185.6,104.5 177.8,112.8" fill="#6f9aa8"/><polygon points="150.8,136.4 161.1,123.7 173.3,131.5 163.5,146.1" fill="#2d3431" opacity="0.6"/><polygon points="149.0,137.3 159.3,124.6 171.5,132.4 161.7,147.0" fill="#8a9598"/><polygon points="158.1,135.9 163.5,129.8 169.1,133.4 163.5,140.8" fill="#2d3431" opacity="0.6"/><polygon points="156.3,136.8 161.7,130.7 167.3,134.3 161.7,141.7" fill="#6fa09a"/><polygon points="172.8,155.9 184.0,140.8 197.7,149.6 187.9,165.7" fill="#2d3431" opacity="0.6"/><polygon points="171.0,156.8 182.2,141.7 195.9,150.5 186.1,166.6" fill="#e0e1db"/><polygon points="178.9,152.5 185.0,145.7 192.3,150.5 186.5,157.9" fill="#2d3431" opacity="0.6"/><polygon points="177.1,153.4 183.2,146.6 190.5,151.4 184.7,158.8" fill="#9a958a"/><polygon points="197.2,121.7 205.0,107.8 213.8,111.5 213.8,131.5" fill="#2d3431" opacity="0.6"/><polygon points="195.4,122.6 203.2,108.7 212.0,112.4 212.0,132.4" fill="#e9e9e3"/><polygon points="185.0,133.9 195.3,126.1 212.4,136.4 205.0,146.1" fill="#2d3431" opacity="0.6"/><polygon points="183.2,134.8 193.5,127.0 210.6,137.3 203.2,147.0" fill="#8e9192"/><polygon points="202.1,177.4 213.8,170.1 213.8,184.7 207.0,188.2" fill="#2d3431" opacity="0.6"/><polygon points="200.3,178.3 212.0,171.0 212.0,185.6 205.2,189.1" fill="#c9c6b8"/><polygon points="54.3,170.6 68.2,153.0 89.0,165.7 75.6,182.8" fill="#2d3431" opacity="0.6"/><polygon points="52.5,171.5 66.4,153.9 87.2,166.6 73.8,183.7" fill="#9aa0a6"/><polygon points="92.2,188.2 97.5,175.5 112.2,155.4 124.4,163.2 111.7,188.2" fill="#2d3431" opacity="0.6"/><polygon points="90.4,189.1 95.7,176.4 110.4,156.3 122.6,164.1 109.9,189.1" fill="#6f7579"/><polygon points="123.9,170.6 134.2,160.3 145.2,168.1 135.4,181.6" fill="#2d3431" opacity="0.6"/><polygon points="122.1,171.5 132.4,161.2 143.4,169.0 133.6,182.5" fill="#a58f78"/><polygon points="128.8,171.3 135.7,165.2 141.0,168.9 134.9,176.2" fill="#2d3431" opacity="0.6"/><polygon points="127.0,172.2 133.9,166.1 139.2,169.8 133.1,177.1" fill="#6a655c"/><polygon points="57.5,131.0 62.9,122.5 73.9,121.2 78.7,131.0 72.6,140.8 61.6,140.8" fill="#2d3431" opacity="0.6"/><polygon points="55.7,131.9 61.1,123.4 72.1,122.1 76.9,131.9 70.8,141.7 59.8,141.7" fill="#a9aaa6"/><polygon points="76.3,139.5 84.8,137.1 88.5,143.2 80.0,146.9" fill="#2d3431" opacity="0.6"/><polygon points="74.5,140.4 83.0,138.0 86.7,144.1 78.2,147.8" fill="#8a6a40"/><polygon points="9.1,126.6 25.5,96.8 35.3,102.2 16.9,132.7" fill="#2d3431" opacity="0.6"/><polygon points="7.3,127.5 23.7,97.7 33.5,103.1 15.1,133.6" fill="#b5a794"/><polygon points="1.8,79.7 21.8,87.5 19.4,96.1 1.8,90.0" fill="#2d3431" opacity="0.6"/><polygon points="0.0,80.6 20.0,88.4 17.6,97.0 0.0,90.9" fill="#8a7464"/><polygon points="33.6,170.1 50.7,167.6 54.3,179.9 38.4,182.3" fill="#2d3431" opacity="0.6"/><polygon points="31.8,171.0 48.9,168.5 52.5,180.8 36.6,183.2" fill="#c9cac6"/><polygon points="1.8,143.2 6.7,145.7 3.0,155.4 1.8,155.4" fill="#2d3431" opacity="0.6"/><polygon points="0.0,144.1 4.9,146.6 1.2,156.3 0.0,156.3" fill="#d0d0cc"/><polygon points="0.0,90.9 12.2,95.7 14.7,114.8 4.9,119.7 0.0,117.2" fill="#4c7238"/><polygon points="0.0,90.9 12.2,95.7 14.7,114.8 4.9,119.7 0.0,117.2" fill="url(#tp)"/><polygon points="0.0,146.6 12.2,146.6 14.7,158.8 2.4,161.2" fill="#4f7239"/><polygon points="0.0,146.6 12.2,146.6 14.7,158.8 2.4,161.2" fill="url(#tp)"/><polygon points="0.0,0.0 9.8,2.4 4.9,9.8 0.0,9.8" fill="#456733"/><polygon points="0.0,0.0 9.8,2.4 4.9,9.8 0.0,9.8" fill="url(#tp)"/><polyline points="92.8,15.4 81.9,34.9 74.5,47.2" fill="none" stroke="#2c4424" stroke-width="8.7" stroke-linecap="round" opacity="0.45" stroke-dasharray="0.1 6.6"/><polyline points="91.6,14.7 80.6,34.2 73.3,46.4" fill="none" stroke="#4f7239" stroke-width="8.3" stroke-linecap="round" stroke-dasharray="0.1 6.6"/><polyline points="112.4,25.2 106.3,42.3" fill="none" stroke="#2c4424" stroke-width="6.7" stroke-linecap="round" opacity="0.45" stroke-dasharray="0.1 5.1"/><polyline points="111.1,24.4 105.0,41.5" fill="none" stroke="#4f7239" stroke-width="6.4" stroke-linecap="round" stroke-dasharray="0.1 5.1"/><polyline points="99.0,50.8 116.1,61.8 138.0,71.6" fill="none" stroke="#2c4424" stroke-width="5.6" stroke-linecap="round" opacity="0.45" stroke-dasharray="0.1 4.3"/><polyline points="97.7,50.1 114.8,61.1 136.8,70.8" fill="none" stroke="#456733" stroke-width="5.4" stroke-linecap="round" stroke-dasharray="0.1 4.3"/><polyline points="162.5,55.7 182.0,71.6 204.0,87.5" fill="none" stroke="#2c4424" stroke-width="7.7" stroke-linecap="round" opacity="0.45" stroke-dasharray="0.1 5.9"/><polyline points="161.2,55.0 180.8,70.8 202.7,86.7" fill="none" stroke="#4f7239" stroke-width="7.3" stroke-linecap="round" stroke-dasharray="0.1 5.9"/><polyline points="116.1,126.5 128.3,110.7 138.0,97.2" fill="none" stroke="#2c4424" stroke-width="6.7" stroke-linecap="round" opacity="0.45" stroke-dasharray="0.1 5.1"/><polyline points="114.8,125.8 127.0,109.9 136.8,96.5" fill="none" stroke="#4f7239" stroke-width="6.4" stroke-linecap="round" stroke-dasharray="0.1 5.1"/><polyline points="167.3,157.1 182.0,137.5 194.2,115.6 206.4,100.9" fill="none" stroke="#2c4424" stroke-width="6.2" stroke-linecap="round" opacity="0.45" stroke-dasharray="0.1 4.7"/><polyline points="166.1,156.3 180.8,136.8 193.0,114.8 205.2,100.1" fill="none" stroke="#4f7239" stroke-width="5.9" stroke-linecap="round" stroke-dasharray="0.1 4.7"/><polyline points="85.5,182.7 101.4,164.4 116.1,147.3" fill="none" stroke="#2c4424" stroke-width="7.2" stroke-linecap="round" opacity="0.45" stroke-dasharray="0.1 5.5"/><polyline points="84.3,182.0 100.1,163.7 114.8,146.6" fill="none" stroke="#4f7239" stroke-width="6.8" stroke-linecap="round" stroke-dasharray="0.1 5.5"/><polyline points="145.4,144.9 157.6,152.2" fill="none" stroke="#2c4424" stroke-width="6.2" stroke-linecap="round" opacity="0.45" stroke-dasharray="0.1 4.7"/><polyline points="144.1,144.1 156.3,151.4" fill="none" stroke="#4f7239" stroke-width="5.9" stroke-linecap="round" stroke-dasharray="0.1 4.7"/><polyline points="123.4,132.7 138.0,140.0" fill="none" stroke="#2c4424" stroke-width="4.6" stroke-linecap="round" opacity="0.45" stroke-dasharray="0.1 3.5"/><polyline points="122.1,131.9 136.8,139.2" fill="none" stroke="#4f7239" stroke-width="4.4" stroke-linecap="round" stroke-dasharray="0.1 3.5"/><polyline points="81.9,127.8 99.0,136.3 108.7,142.4" fill="none" stroke="#2c4424" stroke-width="5.1" stroke-linecap="round" opacity="0.45" stroke-dasharray="0.1 3.9"/><polyline points="80.6,127.0 97.7,135.6 107.5,141.7" fill="none" stroke="#4f7239" stroke-width="4.9" stroke-linecap="round" stroke-dasharray="0.1 3.9"/><polyline points="50.1,122.9 64.8,118.0" fill="none" stroke="#2c4424" stroke-width="5.1" stroke-linecap="round" opacity="0.45" stroke-dasharray="0.1 3.9"/><polyline points="48.9,122.1 63.5,117.2" fill="none" stroke="#4f7239" stroke-width="4.9" stroke-linecap="round" stroke-dasharray="0.1 3.9"/><polyline points="20.8,166.8 33.0,149.7 40.3,140.0" fill="none" stroke="#2c4424" stroke-width="6.7" stroke-linecap="round" opacity="0.45" stroke-dasharray="0.1 5.1"/><polyline points="19.5,166.1 31.8,149.0 39.1,139.2" fill="none" stroke="#4f7239" stroke-width="6.4" stroke-linecap="round" stroke-dasharray="0.1 5.1"/><polyline points="157.6,174.2 177.1,181.5 191.8,189.8" fill="none" stroke="#2c4424" stroke-width="5.6" stroke-linecap="round" opacity="0.45" stroke-dasharray="0.1 4.3"/><polyline points="156.3,173.4 175.9,180.8 190.5,189.1" fill="none" stroke="#4f7239" stroke-width="5.4" stroke-linecap="round" stroke-dasharray="0.1 4.3"/><polyline points="63.5,81.4 72.1,64.3" fill="none" stroke="#2c4424" stroke-width="4.6" stroke-linecap="round" opacity="0.45" stroke-dasharray="0.1 3.5"/><polyline points="62.3,80.6 70.8,63.5" fill="none" stroke="#456733" stroke-width="4.4" stroke-linecap="round" stroke-dasharray="0.1 3.5"/><polyline points="172.2,8.1 196.7,20.3 213.3,27.6" fill="none" stroke="#2c4424" stroke-width="7.7" stroke-linecap="round" opacity="0.45" stroke-dasharray="0.1 5.9"/><polyline points="171.0,7.3 195.4,19.5 212.0,26.9" fill="none" stroke="#4f7239" stroke-width="7.3" stroke-linecap="round" stroke-dasharray="0.1 5.9"/><polygon points="92.8,0.0 102.6,0.0 97.7,7.3" fill="#65884a"/><polygon points="92.8,0.0 102.6,0.0 97.7,7.3" fill="url(#tp)"/><polyline points="84.3,81.4 96.5,74.0" fill="none" stroke="#2c4424" stroke-width="3.6" stroke-linecap="round" opacity="0.45" stroke-dasharray="0.1 2.7"/><polyline points="83.0,80.6 95.3,73.3" fill="none" stroke="#456733" stroke-width="3.4" stroke-linecap="round" stroke-dasharray="0.1 2.7"/><polyline points="74.5,108.2 94.1,115.6 111.2,122.9" fill="none" stroke="#2c4424" stroke-width="3.6" stroke-linecap="round" opacity="0.45" stroke-dasharray="0.1 2.7"/><polyline points="73.3,107.5 92.8,114.8 109.9,122.1" fill="none" stroke="#456733" stroke-width="3.4" stroke-linecap="round" stroke-dasharray="0.1 2.7"/><polyline points="8.6,61.8 28.1,71.6" fill="none" stroke="#2c4424" stroke-width="3.6" stroke-linecap="round" opacity="0.45" stroke-dasharray="0.1 2.7"/><polyline points="7.3,61.1 26.9,70.8" fill="none" stroke="#456733" stroke-width="3.4" stroke-linecap="round" stroke-dasharray="0.1 2.7"/><polyline points="26.9,378.1 39.1,345.3 64.0,311.1 83.5,281.8 107.5,245.7 114.8,233.0" fill="none" stroke="#b1b4b0" stroke-width="6.4" stroke-linecap="butt"/><polyline points="61.1,325.8 102.6,350.2 146.6,378.1" fill="none" stroke="#a9aca8" stroke-width="5.4" stroke-linecap="butt"/><polyline points="14.7,274.5 0.0,294.0" fill="none" stroke="#b3b6b2" stroke-width="4.4" stroke-linecap="butt"/><polyline points="117.2,225.6 92.8,262.3 73.3,294.0" fill="none" stroke="#a9aca8" stroke-width="3.4" stroke-linecap="butt" opacity="0.7"/><polygon points="92.8,250.1 107.5,235.4 122.1,245.2 107.5,269.6" fill="#b3b4ae"/><polygon points="0.0,269.6 17.1,269.6 22.0,281.8 7.3,294.0 0.0,294.0" fill="#9fa29f"/><polygon points="18.9,198.4 29.2,188.1 65.8,205.7 58.5,215.5 48.7,210.6 45.8,215.5 24.3,203.2" fill="#2d3431" opacity="0.6"/><polygon points="17.1,199.3 27.4,189.0 64.0,206.6 56.7,216.4 46.9,211.5 44.0,216.4 22.5,204.1" fill="#dddcd6"/><polygon points="31.1,200.3 48.2,207.6 45.8,212.5 28.7,204.7" fill="#2d3431" opacity="0.6"/><polygon points="29.3,201.2 46.4,208.5 44.0,213.4 26.9,205.6" fill="#8f8a68"/><polygon points="4.2,220.3 14.0,207.6 20.4,211.5 11.6,225.2" fill="#2d3431" opacity="0.6"/><polygon points="2.4,221.2 12.2,208.5 18.6,212.4 9.8,226.1" fill="#dfe0dc"/><polygon points="16.5,232.6 24.3,224.7 44.8,237.4 38.4,244.8" fill="#2d3431" opacity="0.6"/><polygon points="14.7,233.5 22.5,225.6 43.0,238.3 36.6,245.7" fill="#e2e2dd"/><polygon points="29.9,227.2 37.2,221.1 43.3,224.7 37.2,232.1" fill="#2d3431" opacity="0.6"/><polygon points="28.1,228.1 35.4,222.0 41.5,225.6 35.4,233.0" fill="#d5d6d2"/><polygon points="16.5,219.9 26.2,222.3 25.0,227.2 16.5,224.7" fill="#2d3431" opacity="0.6"/><polygon points="14.7,220.8 24.4,223.2 23.2,228.1 14.7,225.6" fill="#5f6a78"/><polygon points="0.0,208.5 9.8,211.0 4.9,220.8 0.0,220.8" fill="#7f9a5a"/><polygon points="0.0,208.5 9.8,211.0 4.9,220.8 0.0,220.8" fill="url(#tp)"/><polygon points="62.9,230.1 78.0,212.5 100.0,227.7 85.3,247.2" fill="#2d3431" opacity="0.6"/><polygon points="61.1,231.0 76.2,213.4 98.2,228.6 83.5,248.1" fill="#b9bcb8"/><polygon points="66.5,229.6 78.7,216.2 87.3,222.3 75.1,235.7" fill="#2d3431" opacity="0.6"/><polygon points="64.7,230.5 76.9,217.1 85.5,223.2 73.3,236.6" fill="#dcdcd8"/><polygon points="85.5,225.6 94.0,222.0 97.7,228.6 89.2,233.5" fill="#7a8a50"/><polygon points="85.5,225.6 94.0,222.0 97.7,228.6 89.2,233.5" fill="url(#tp)"/><polygon points="78.7,240.6 86.1,235.7 90.2,242.3 83.6,247.2" fill="#2d3431" opacity="0.6"/><polygon points="76.9,241.5 84.3,236.6 88.4,243.2 81.8,248.1" fill="#8a6a3a"/><polygon points="47.0,259.4 58.5,241.8 81.7,254.5 70.7,274.1" fill="#2d3431" opacity="0.6"/><polygon points="45.2,260.3 56.7,242.7 79.9,255.4 68.9,275.0" fill="#c3c5c2"/><polygon points="50.7,258.9 60.4,245.5 72.6,252.1 63.4,265.8" fill="#2d3431" opacity="0.6"/><polygon points="48.9,259.8 58.6,246.4 70.8,253.0 61.6,266.7" fill="#dfdfdb"/><polygon points="71.4,255.3 78.0,251.1 81.2,257.7 75.1,261.4" fill="#2d3431" opacity="0.6"/><polygon points="69.6,256.2 76.2,252.0 79.4,258.6 73.3,262.3" fill="#9a6a48"/><polygon points="59.2,269.9 67.8,266.3 71.4,272.4 62.9,276.0" fill="#2d3431" opacity="0.6"/><polygon points="57.4,270.8 66.0,267.2 69.6,273.3 61.1,276.9" fill="#a8704a"/><polygon points="1.8,242.3 24.3,257.0 16.9,269.2 1.8,259.4" fill="#2d3431" opacity="0.6"/><polygon points="0.0,243.2 22.5,257.9 15.1,270.1 0.0,260.3" fill="#8f9496"/><polygon points="38.4,279.0 43.8,271.1 68.2,286.3 63.4,293.6" fill="#2d3431" opacity="0.6"/><polygon points="36.6,279.9 42.0,272.0 66.4,287.2 61.6,294.5" fill="#56606c"/><polygon points="1.8,290.7 6.7,293.1 4.2,302.9 1.8,302.9" fill="#2d3431" opacity="0.6"/><polygon points="0.0,291.6 4.9,294.0 2.4,303.8 0.0,303.8" fill="#6a5a4a"/><polygon points="19.5,297.0 34.7,279.4 59.1,297.0 56.7,316.5 44.5,336.0 27.4,326.3" fill="#5a8040"/><polygon points="19.5,297.0 34.7,279.4 59.1,297.0 56.7,316.5 44.5,336.0 27.4,326.3" fill="url(#tp)"/><polygon points="4.9,311.6 20.0,299.4 32.2,316.5 17.6,328.7" fill="#b8b39a"/><polygon points="31.8,326.3 44.0,316.0 49.3,326.3 39.6,338.5" fill="#b5b098"/><polygon points="41.5,296.5 52.5,294.0 55.0,303.8 46.4,306.2" fill="#a9b08a"/><polygon points="0.0,206.1 7.3,189.0 22.0,189.0 14.7,198.8 4.9,215.9" fill="#688c4a"/><polygon points="0.0,206.1 7.3,189.0 22.0,189.0 14.7,198.8 4.9,215.9" fill="url(#tp)"/><polygon points="80.5,200.8 95.1,188.1 119.5,208.1 112.2,220.3" fill="#2d3431" opacity="0.6"/><polygon points="78.7,201.7 93.3,189.0 117.7,209.0 110.4,221.2" fill="#72777a"/><polygon points="89.7,188.1 106.8,188.1 111.7,193.0 106.8,197.9" fill="#2d3431" opacity="0.6"/><polygon points="87.9,189.0 105.0,189.0 109.9,193.9 105.0,198.8" fill="#5a5f62"/><polygon points="116.6,232.6 129.3,216.2 145.2,225.2 131.7,244.8" fill="#2d3431" opacity="0.6"/><polygon points="114.8,233.5 127.5,217.1 143.4,226.1 129.9,245.7" fill="#d6d0c1"/><polygon points="128.8,224.7 134.9,222.3 137.4,227.2 131.3,230.1" fill="#2d3431" opacity="0.6"/><polygon points="127.0,225.6 133.1,223.2 135.6,228.1 129.5,231.0" fill="#8a5a3a"/><polygon points="141.0,203.2 151.3,190.5 178.2,206.9 168.4,222.8" fill="#2d3431" opacity="0.6"/><polygon points="139.2,204.1 149.5,191.4 176.4,207.8 166.6,223.7" fill="#a9aaa4"/><polygon points="144.7,205.2 153.2,195.4 172.8,207.2 165.0,217.4" fill="#2d3431" opacity="0.6"/><polygon points="142.9,206.1 151.4,196.3 171.0,208.1 163.2,218.3" fill="#b89a80"/><polygon points="150.8,205.2 158.1,199.1 164.2,203.2 158.1,210.1" fill="#2d3431" opacity="0.6"/><polygon points="149.0,206.1 156.3,200.0 162.4,204.1 156.3,211.0" fill="#3a3f40"/><polygon points="171.6,227.7 183.0,212.5 202.6,222.8 190.4,241.1" fill="#2d3431" opacity="0.6"/><polygon points="169.8,228.6 181.2,213.4 200.8,223.7 188.6,242.0" fill="#8b6b56"/><polygon points="178.2,226.0 185.5,217.4 196.0,223.5 188.7,233.3" fill="#2d3431" opacity="0.6"/><polygon points="176.4,226.9 183.7,218.3 194.2,224.4 186.9,234.2" fill="#4a5058"/><polygon points="143.5,249.7 158.6,234.5 195.3,259.4 163.5,303.4 146.4,291.2 158.6,269.2" fill="#2d3431" opacity="0.6"/><polygon points="141.7,250.6 156.8,235.4 193.5,260.3 161.7,304.3 144.6,292.1 156.8,270.1" fill="#555a5f"/><polygon points="148.4,252.1 160.1,239.9 189.9,260.4 181.3,272.4 158.1,258.9" fill="#2d3431" opacity="0.6"/><polygon points="146.6,253.0 158.3,240.8 188.1,261.3 179.5,273.3 156.3,259.8" fill="#63686d"/><polygon points="123.9,279.0 141.5,254.1 161.1,269.2 146.4,291.2" fill="#2d3431" opacity="0.6"/><polygon points="122.1,279.9 139.7,255.0 159.3,270.1 144.6,292.1" fill="#bfc3c3"/><polyline points="127.0,273.3 146.6,286.7" fill="none" stroke="#e3e5e4" stroke-width="1.0" stroke-linecap="butt"/><polyline points="131.4,267.4 151.0,280.8" fill="none" stroke="#e3e5e4" stroke-width="1.0" stroke-linecap="butt"/><polyline points="135.8,261.5 155.3,275.0" fill="none" stroke="#e3e5e4" stroke-width="1.0" stroke-linecap="butt"/><polyline points="140.2,255.7 159.7,269.1" fill="none" stroke="#e3e5e4" stroke-width="1.0" stroke-linecap="butt"/><polygon points="165.9,305.8 209.9,243.1 213.8,246.7 213.8,254.1 187.9,286.3 192.8,291.2 178.2,310.7" fill="#2d3431" opacity="0.6"/><polygon points="164.1,306.7 208.1,244.0 212.0,247.6 212.0,255.0 186.1,287.2 191.0,292.1 176.4,311.6" fill="#dadbd5"/><polygon points="91.0,325.4 113.4,293.1 131.7,305.8 126.9,320.5 139.1,305.8 156.2,320.5 144.0,337.6 124.4,325.4 112.2,337.6" fill="#2d3431" opacity="0.6"/><polygon points="89.2,326.3 111.6,294.0 129.9,306.7 125.1,321.4 137.3,306.7 154.4,321.4 142.2,338.5 122.6,326.3 110.4,338.5" fill="#626b74"/><polygon points="94.6,324.9 114.2,296.8 128.8,306.6 110.5,333.4" fill="#2d3431" opacity="0.6"/><polygon points="92.8,325.8 112.4,297.7 127.0,307.5 108.7,334.3" fill="#6d7781"/><polygon points="146.4,337.6 165.9,307.8 178.2,315.6 158.6,347.4" fill="#2d3431" opacity="0.6"/><polygon points="144.6,338.5 164.1,308.7 176.4,316.5 156.8,348.3" fill="#8995a1"/><polygon points="110.4,338.5 122.6,326.3 142.2,338.5 156.8,348.3 147.0,360.5 117.7,348.3" fill="#d4d5cf"/><polygon points="121.5,334.7 128.8,329.8 134.9,334.7 127.6,342.0" fill="#2d3431" opacity="0.6"/><polygon points="119.7,335.6 127.0,330.7 133.1,335.6 125.8,342.9" fill="#8a8f90"/><polygon points="72.6,320.5 117.1,254.1 124.4,258.9 100.0,296.1 82.9,325.4" fill="#2d3431" opacity="0.6"/><polygon points="70.8,321.4 115.3,255.0 122.6,259.8 98.2,297.0 81.1,326.3" fill="#c9cac4"/><polygon points="104.4,268.7 116.6,254.1 122.7,258.4 111.7,273.6" fill="#2d3431" opacity="0.6"/><polygon points="102.6,269.6 114.8,255.0 120.9,259.3 109.9,274.5" fill="#dadad4"/><polygon points="114.8,294.0 136.8,303.8 151.4,311.1 136.8,306.2 129.5,306.2" fill="#5a8040"/><polygon points="114.8,294.0 136.8,303.8 151.4,311.1 136.8,306.2 129.5,306.2" fill="url(#tp)"/><polyline points="116.1,289.9 133.2,297.2 152.7,307.0" fill="none" stroke="#2c4424" stroke-width="6.7" stroke-linecap="round" opacity="0.45" stroke-dasharray="0.1 5.1"/><polyline points="114.8,289.1 131.9,296.5 151.4,306.2" fill="none" stroke="#4f7239" stroke-width="6.4" stroke-linecap="round" stroke-dasharray="0.1 5.1"/><polygon points="173.3,340.0 187.9,318.0 205.0,327.8 187.9,354.7" fill="#2d3431" opacity="0.6"/><polygon points="171.5,340.9 186.1,318.9 203.2,328.7 186.1,355.6" fill="#dcdcd4"/><polygon points="151.4,378.1 171.5,355.6 193.0,345.3 212.0,331.2 212.0,378.1" fill="#5a8440"/><polygon points="151.4,378.1 171.5,355.6 193.0,345.3 212.0,331.2 212.0,378.1" fill="url(#tp)"/><polyline points="175.9,378.1 212.0,345.3" fill="none" stroke="#9aa882" stroke-width="1.2" stroke-linecap="butt"/><polygon points="136.8,357.5 156.3,364.9 151.4,378.1 131.9,378.1" fill="#688c4a"/><polygon points="136.8,357.5 156.3,364.9 151.4,378.1 131.9,378.1" fill="url(#tp)"/><polygon points="1.8,335.1 29.2,349.8 12.1,377.2 1.8,369.3" fill="#2d3431" opacity="0.6"/><polygon points="0.0,336.0 27.4,350.7 10.3,378.1 0.0,370.2" fill="#8f9496"/><polygon points="2.4,345.3 19.5,355.1 9.8,369.8 0.0,364.9" fill="#7f8f70"/><polygon points="2.4,345.3 19.5,355.1 9.8,369.8 0.0,364.9" fill="url(#tp)"/><polygon points="33.6,377.2 43.3,364.0 60.4,377.2" fill="#2d3431" opacity="0.6"/><polygon points="31.8,378.1 41.5,364.9 58.6,378.1" fill="#7a7a60"/><polygon points="58.5,344.9 63.4,335.1 87.8,349.8 80.5,359.6" fill="#2d3431" opacity="0.6"/><polygon points="56.7,345.8 61.6,336.0 86.0,350.7 78.7,360.5" fill="#8c8a80"/><polygon points="61.1,345.3 64.0,340.0 80.6,350.2 76.9,355.1" fill="#6f7f5a"/><polygon points="61.1,345.3 64.0,340.0 80.6,350.2 76.9,355.1" fill="url(#tp)"/><polygon points="85.3,359.6 95.1,352.2 129.3,377.2 100.0,377.2" fill="#2d3431" opacity="0.6"/><polygon points="83.5,360.5 93.3,353.1 127.5,378.1 98.2,378.1" fill="#9a8a7a"/><polygon points="92.2,360.3 97.5,356.6 119.0,372.5 112.9,376.2" fill="#2d3431" opacity="0.6"/><polygon points="90.4,361.2 95.7,357.5 117.2,373.4 111.1,377.1" fill="#c9c5bc"/><polyline points="64.8,204.4 52.5,226.4 37.9,250.8" fill="none" stroke="#2c4424" stroke-width="7.7" stroke-linecap="round" opacity="0.45" stroke-dasharray="0.1 5.9"/><polyline points="63.5,203.7 51.3,225.6 36.6,250.1" fill="none" stroke="#4f7239" stroke-width="7.3" stroke-linecap="round" stroke-dasharray="0.1 5.9"/><polyline points="6.1,238.6 23.2,250.8" fill="none" stroke="#2c4424" stroke-width="4.6" stroke-linecap="round" opacity="0.45" stroke-dasharray="0.1 3.5"/><polyline points="4.9,237.9 22.0,250.1" fill="none" stroke="#456733" stroke-width="4.4" stroke-linecap="round" stroke-dasharray="0.1 3.5"/><polyline points="81.9,216.6 99.0,226.4 116.1,221.5" fill="none" stroke="#2c4424" stroke-width="6.2" stroke-linecap="round" opacity="0.45" stroke-dasharray="0.1 4.7"/><polyline points="80.6,215.9 97.7,225.6 114.8,220.8" fill="none" stroke="#456733" stroke-width="5.9" stroke-linecap="round" stroke-dasharray="0.1 4.7"/><polyline points="101.4,243.5 86.7,267.9 74.5,289.9 69.6,307.0" fill="none" stroke="#2c4424" stroke-width="5.1" stroke-linecap="round" opacity="0.45" stroke-dasharray="0.1 3.9"/><polyline points="100.1,242.7 85.5,267.2 73.3,289.1 68.4,306.2" fill="none" stroke="#4f7239" stroke-width="4.9" stroke-linecap="round" stroke-dasharray="0.1 3.9"/><polyline points="108.7,263.0 94.1,287.5" fill="none" stroke="#2c4424" stroke-width="4.1" stroke-linecap="round" opacity="0.45" stroke-dasharray="0.1 3.1"/><polyline points="107.5,262.3 92.8,286.7" fill="none" stroke="#4f7239" stroke-width="3.9" stroke-linecap="round" stroke-dasharray="0.1 3.1"/><polyline points="50.1,346.1 74.5,360.7 91.6,378.8" fill="none" stroke="#2c4424" stroke-width="7.2" stroke-linecap="round" opacity="0.45" stroke-dasharray="0.1 5.5"/><polyline points="48.9,345.3 73.3,360.0 90.4,378.1" fill="none" stroke="#4f7239" stroke-width="6.8" stroke-linecap="round" stroke-dasharray="0.1 5.5"/><polyline points="59.9,331.4 81.9,343.6 103.8,358.3" fill="none" stroke="#2c4424" stroke-width="5.1" stroke-linecap="round" opacity="0.45" stroke-dasharray="0.1 3.9"/><polyline points="58.6,330.7 80.6,342.9 102.6,357.5" fill="none" stroke="#4f7239" stroke-width="4.9" stroke-linecap="round" stroke-dasharray="0.1 3.9"/><polyline points="118.5,351.0 133.2,360.7" fill="none" stroke="#2c4424" stroke-width="4.6" stroke-linecap="round" opacity="0.45" stroke-dasharray="0.1 3.5"/><polyline points="117.2,350.2 131.9,360.0" fill="none" stroke="#4f7239" stroke-width="4.4" stroke-linecap="round" stroke-dasharray="0.1 3.5"/><polyline points="86.7,326.5 99.0,336.3 108.7,346.1" fill="none" stroke="#2c4424" stroke-width="6.2" stroke-linecap="round" opacity="0.45" stroke-dasharray="0.1 4.7"/><polyline points="85.5,325.8 97.7,335.6 107.5,345.3" fill="none" stroke="#4f7239" stroke-width="5.9" stroke-linecap="round" stroke-dasharray="0.1 4.7"/><polyline points="167.3,326.5 157.6,346.1 147.8,365.6" fill="none" stroke="#2c4424" stroke-width="5.6" stroke-linecap="round" opacity="0.45" stroke-dasharray="0.1 4.3"/><polyline points="166.1,325.8 156.3,345.3 146.6,364.9" fill="none" stroke="#4f7239" stroke-width="5.4" stroke-linecap="round" stroke-dasharray="0.1 4.3"/><polyline points="152.7,189.8 177.1,204.4 196.7,216.6 213.3,221.5" fill="none" stroke="#2c4424" stroke-width="6.7" stroke-linecap="round" opacity="0.45" stroke-dasharray="0.1 5.1"/><polyline points="151.4,189.0 175.9,203.7 195.4,215.9 212.0,220.8" fill="none" stroke="#4f7239" stroke-width="6.4" stroke-linecap="round" stroke-dasharray="0.1 5.1"/><polyline points="11.0,326.5 25.7,336.3 42.8,346.1" fill="none" stroke="#2c4424" stroke-width="4.1" stroke-linecap="round" opacity="0.45" stroke-dasharray="0.1 3.1"/><polyline points="9.8,325.8 24.4,335.6 41.5,345.3" fill="none" stroke="#456733" stroke-width="3.9" stroke-linecap="round" stroke-dasharray="0.1 3.1"/><polyline points="142.9,233.7 128.3,253.3" fill="none" stroke="#2c4424" stroke-width="3.6" stroke-linecap="round" opacity="0.45" stroke-dasharray="0.1 2.7"/><polyline points="141.7,233.0 127.0,252.5" fill="none" stroke="#456733" stroke-width="3.4" stroke-linecap="round" stroke-dasharray="0.1 2.7"/><polyline points="8.6,282.6 15.9,292.3" fill="none" stroke="#2c4424" stroke-width="5.1" stroke-linecap="round" opacity="0.45" stroke-dasharray="0.1 3.9"/><polyline points="7.3,281.8 14.7,291.6" fill="none" stroke="#4f7239" stroke-width="4.9" stroke-linecap="round" stroke-dasharray="0.1 3.9"/><polygon points="66.0,285.5 73.3,283.0 75.7,289.1 69.6,292.8" fill="#456733"/><polygon points="66.0,285.5 73.3,283.0 75.7,289.1 69.6,292.8" fill="url(#tp)"/><polygon points="212.0,208.5 226.7,218.3 241.3,237.9 256.0,250.1 236.4,269.6 212.0,252.5" fill="#8a9088"/><polyline points="292.6,237.9 319.5,198.8 329.2,189.0" fill="none" stroke="#a9aca8" stroke-width="6.8" stroke-linecap="butt"/><polygon points="283.4,232.6 304.7,197.9 314.4,203.2 292.5,237.4" fill="#2d3431" opacity="0.6"/><polygon points="281.6,233.5 302.9,198.8 312.6,204.1 290.7,238.3" fill="#8a8a3a"/><polygon points="305.4,244.8 329.1,211.3 336.4,216.2 314.4,250.9" fill="#2d3431" opacity="0.6"/><polygon points="303.6,245.7 327.3,212.2 334.6,217.1 312.6,251.8" fill="#9aa088"/><polygon points="307.7,244.0 326.8,217.1 330.5,219.5 311.7,247.1" fill="#7f9a55"/><polygon points="307.7,244.0 326.8,217.1 330.5,219.5 311.7,247.1" fill="url(#tp)"/><polygon points="331.7,223.2 337.1,217.1 345.6,222.0 340.7,228.6" fill="#8a9a55"/><polygon points="331.7,223.2 337.1,217.1 345.6,222.0 340.7,228.6" fill="url(#tp)"/><polygon points="335.9,195.4 345.7,188.1 399.4,207.6 394.6,215.0 370.1,217.4" fill="#2d3431" opacity="0.6"/><polygon points="334.1,196.3 343.9,189.0 397.6,208.5 392.8,215.9 368.3,218.3" fill="#9a9d9c"/><polygon points="342.0,193.5 351.1,188.1 387.7,206.9 380.4,214.2" fill="#2d3431" opacity="0.6"/><polygon points="340.2,194.4 349.3,189.0 385.9,207.8 378.6,215.1" fill="#8f5f3a"/><polygon points="384.8,188.1 409.2,188.1 401.9,195.4 389.7,194.2" fill="#2d3431" opacity="0.6"/><polygon points="383.0,189.0 407.4,189.0 400.1,196.3 387.9,195.1" fill="#aab0a6"/><polygon points="407.4,208.5 414.7,193.9 424.0,189.0 424.0,215.9" fill="#d8c9a8"/><polygon points="358.6,218.3 397.6,213.4 424.0,215.9 424.0,233.0 383.0,230.5 348.8,237.9" fill="#5c8642"/><polygon points="358.6,218.3 397.6,213.4 424.0,215.9 424.0,233.0 383.0,230.5 348.8,237.9" fill="url(#tp)"/><polygon points="314.6,253.0 339.0,237.9 368.3,230.5 383.0,237.9 348.8,247.6 326.8,262.3" fill="#587f3e"/><polygon points="314.6,253.0 339.0,237.9 368.3,230.5 383.0,237.9 348.8,247.6 326.8,262.3" fill="url(#tp)"/><polygon points="383.0,225.6 424.0,218.3 424.0,252.5 407.4,245.2" fill="#688f4a"/><polygon points="383.0,225.6 424.0,218.3 424.0,252.5 407.4,245.2" fill="url(#tp)"/><polygon points="329.2,253.0 348.8,247.6 368.3,242.7 358.6,259.8 348.8,270.1 339.0,270.1" fill="#c8c4b3"/><polygon points="345.7,259.4 357.9,249.2 362.8,252.8 350.6,265.8" fill="#2d3431" opacity="0.6"/><polygon points="343.9,260.3 356.1,250.1 361.0,253.7 348.8,266.7" fill="#8a8f90"/><polygon points="351.2,270.1 381.0,237.9 393.2,245.7 363.9,277.4" fill="#7f9068"/><polygon points="351.2,270.1 381.0,237.9 393.2,245.7 363.9,277.4" fill="url(#tp)"/><polyline points="356.1,272.0 384.2,244.2" fill="none" stroke="#9aa58a" stroke-width="0.7" stroke-linecap="butt"/><polyline points="359.0,269.6 387.1,241.8" fill="none" stroke="#9aa58a" stroke-width="0.7" stroke-linecap="butt"/><polyline points="362.0,267.2 390.1,239.3" fill="none" stroke="#9aa58a" stroke-width="0.7" stroke-linecap="butt"/><polyline points="364.9,264.7 393.0,236.9" fill="none" stroke="#9aa58a" stroke-width="0.7" stroke-linecap="butt"/><polygon points="358.6,287.2 371.3,281.8 392.8,262.3 407.4,247.6 414.7,255.0 397.6,276.9 383.5,292.1 371.3,299.4" fill="#c5c5bc"/><polygon points="382.3,279.0 385.3,261.9 407.3,247.2 414.6,254.5 392.6,286.3" fill="#2d3431" opacity="0.6"/><polygon points="380.5,279.9 383.5,262.8 405.5,248.1 412.8,255.4 390.8,287.2" fill="#595e66"/><polygon points="395.8,269.2 403.6,263.8 407.3,270.4 399.9,275.3" fill="#2d3431" opacity="0.6"/><polygon points="394.0,270.1 401.8,264.7 405.5,271.3 398.1,276.2" fill="#e6e6e2"/><polygon points="405.0,276.9 424.0,272.0 424.0,296.5 407.4,291.6" fill="#b5b5ac"/><polygon points="416.5,258.9 425.8,254.1 425.8,266.3 419.0,268.7" fill="#2d3431" opacity="0.6"/><polygon points="414.7,259.8 424.0,255.0 424.0,267.2 417.2,269.6" fill="#9a9a90"/><polygon points="399.9,308.3 417.0,295.6 425.8,302.9 425.8,330.3 419.5,329.0" fill="#2d3431" opacity="0.6"/><polygon points="398.1,309.2 415.2,296.5 424.0,303.8 424.0,331.2 417.7,329.9" fill="#eeeeea"/><polygon points="368.3,296.5 387.9,286.7 407.4,291.6 397.6,308.7 417.2,330.7 424.0,345.3 424.0,360.0 397.6,335.6 373.2,316.0" fill="#4c7636"/><polygon points="368.3,296.5 387.9,286.7 407.4,291.6 397.6,308.7 417.2,330.7 424.0,345.3 424.0,360.0 397.6,335.6 373.2,316.0" fill="url(#tp)"/><polygon points="392.8,269.6 412.3,264.7 414.7,286.7 397.6,294.0" fill="#527c3a"/><polygon points="392.8,269.6 412.3,264.7 414.7,286.7 397.6,294.0" fill="url(#tp)"/><polygon points="251.1,287.2 268.7,255.0 293.1,267.7 285.8,287.2 261.3,306.7 236.9,326.3 234.5,316.5" fill="#5e8a44"/><polygon points="251.1,287.2 268.7,255.0 293.1,267.7 285.8,287.2 261.3,306.7 236.9,326.3 234.5,316.5" fill="url(#tp)"/><polygon points="271.8,264.7 284.1,262.3 287.7,273.3 276.7,276.9" fill="#3f6f30"/><polygon points="271.8,264.7 284.1,262.3 287.7,273.3 276.7,276.9" fill="url(#tp)"/><polyline points="256.0,291.6 275.5,281.8 285.3,269.6" fill="none" stroke="#a9b58a" stroke-width="1.0" stroke-linecap="butt"/><polyline points="268.2,259.8 273.1,276.9 280.4,286.7" fill="none" stroke="#a9b58a" stroke-width="0.7" stroke-linecap="butt"/><polygon points="236.4,325.8 260.9,306.7 268.2,311.1 246.2,330.7" fill="#688f4a"/><polygon points="236.4,325.8 260.9,306.7 268.2,311.1 246.2,330.7" fill="url(#tp)"/><polyline points="241.3,250.1 260.9,262.3 248.6,286.7 226.7,320.9" fill="none" stroke="#a9aca6" stroke-width="5.4" stroke-linecap="butt"/><polyline points="264.5,253.3 252.3,272.8 240.1,292.3" fill="none" stroke="#2c4424" stroke-width="7.7" stroke-linecap="round" opacity="0.45" stroke-dasharray="0.1 5.9"/><polyline points="263.3,252.5 251.1,272.0 238.9,291.6" fill="none" stroke="#4f7239" stroke-width="7.3" stroke-linecap="round" stroke-dasharray="0.1 5.9"/><polygon points="213.8,269.2 228.9,249.2 250.9,261.9 224.1,308.3 213.8,310.7" fill="#2d3431" opacity="0.6"/><polygon points="212.0,270.1 227.1,250.1 249.1,262.8 222.3,309.2 212.0,311.6" fill="#8d9296"/><polygon points="228.9,249.7 238.2,246.7 250.9,261.9 243.1,266.3" fill="#2d3431" opacity="0.6"/><polygon points="227.1,250.6 236.4,247.6 249.1,262.8 241.3,267.2" fill="#e6e6e0"/><polygon points="237.0,254.1 242.6,252.1 245.1,257.7 239.4,260.2" fill="#2d3431" opacity="0.6"/><polygon points="235.2,255.0 240.8,253.0 243.3,258.6 237.6,261.1" fill="#a0603a"/><polygon points="285.1,303.4 309.5,283.4 336.4,298.5 312.0,325.4" fill="#2d3431" opacity="0.6"/><polygon points="283.3,304.3 307.7,284.3 334.6,299.4 310.2,326.3" fill="#808a7a"/><polygon points="293.8,303.8 308.5,292.8 323.1,300.1 309.2,314.8" fill="#6f9a50"/><polygon points="293.8,303.8 308.5,292.8 323.1,300.1 309.2,314.8" fill="url(#tp)"/><polygon points="305.4,299.2 311.5,295.6 316.4,300.9 310.3,305.3" fill="#2d3431" opacity="0.6"/><polygon points="303.6,300.1 309.7,296.5 314.6,301.8 308.5,306.2" fill="#c9a07a"/><polygon points="324.2,327.8 346.2,307.8 365.7,320.5 360.8,327.8 347.4,318.0 331.5,335.1" fill="#2d3431" opacity="0.6"/><polygon points="322.4,328.7 344.4,308.7 363.9,321.4 359.0,328.7 345.6,318.9 329.7,336.0" fill="#7f868a"/><polygon points="334.1,330.7 345.9,322.1 358.6,331.9 343.9,347.8" fill="#5c8642"/><polygon points="334.1,330.7 345.9,322.1 358.6,331.9 343.9,347.8" fill="url(#tp)"/><polygon points="275.4,313.2 287.6,307.8 294.9,322.9 283.9,332.7" fill="#2d3431" opacity="0.6"/><polygon points="273.6,314.1 285.8,308.7 293.1,323.8 282.1,333.6" fill="#dcdad2"/><polygon points="279.8,320.0 287.1,317.1 291.5,324.9 284.6,329.3" fill="#2d3431" opacity="0.6"/><polygon points="278.0,320.9 285.3,318.0 289.7,325.8 282.8,330.2" fill="#8a5a3a"/><polygon points="263.1,330.3 275.4,324.9 280.2,337.6 269.2,344.9" fill="#2d3431" opacity="0.6"/><polygon points="261.3,331.2 273.6,325.8 278.4,338.5 267.4,345.8" fill="#c9c9c0"/><polygon points="264.5,333.1 271.8,330.2 275.0,336.8 268.2,340.4" fill="#7f9a5a"/><polygon points="264.5,333.1 271.8,330.2 275.0,336.8 268.2,340.4" fill="url(#tp)"/><polygon points="265.7,345.3 309.7,327.0 320.0,345.8 285.8,365.4" fill="#b3b3aa"/><polygon points="293.7,359.6 314.4,340.8 334.0,357.1 329.1,363.2 314.4,351.0 299.8,365.7" fill="#2d3431" opacity="0.6"/><polygon points="291.9,360.5 312.6,341.7 332.2,358.0 327.3,364.1 312.6,351.9 298.0,366.6" fill="#8a4a30"/><polygon points="304.8,364.9 314.6,357.5 326.8,367.3 317.0,378.1 304.8,378.1" fill="#688c4a"/><polygon points="304.8,364.9 314.6,357.5 326.8,367.3 317.0,378.1 304.8,378.1" fill="url(#tp)"/><polygon points="349.3,358.0 368.8,338.0 388.4,355.6 368.8,378.1 359.0,370.2" fill="#7f9a5a"/><polygon points="349.3,358.0 368.8,338.0 388.4,355.6 368.8,378.1 359.0,370.2" fill="url(#tp)"/><polygon points="360.4,356.6 370.6,346.9 379.9,355.4 370.1,365.2" fill="#2d3431" opacity="0.6"/><polygon points="358.6,357.5 368.8,347.8 378.1,356.3 368.3,366.1" fill="#4a5048"/><polygon points="350.6,354.2 357.9,349.3 363.3,356.6 356.7,362.7" fill="#2d3431" opacity="0.6"/><polygon points="348.8,355.1 356.1,350.2 361.5,357.5 354.9,363.6" fill="#8a5a3a"/><polygon points="383.0,360.0 402.5,345.3 424.0,364.9 424.0,378.1 397.6,378.1" fill="#7a9460"/><polygon points="383.0,360.0 402.5,345.3 424.0,364.9 424.0,378.1 397.6,378.1" fill="url(#tp)"/><polygon points="368.3,330.7 383.0,325.8 397.6,340.4 383.0,350.2" fill="#8aa070"/><polygon points="368.3,330.7 383.0,325.8 397.6,340.4 383.0,350.2" fill="url(#tp)"/><polygon points="340.8,371.3 350.6,368.9 355.5,377.2 340.8,377.2" fill="#2d3431" opacity="0.6"/><polygon points="339.0,372.2 348.8,369.8 353.7,378.1 339.0,378.1" fill="#8a98a6"/><polygon points="212.0,336.0 244.2,333.6 227.1,355.6 212.0,360.5" fill="#5a8440"/><polygon points="212.0,336.0 244.2,333.6 227.1,355.6 212.0,360.5" fill="url(#tp)"/><polygon points="213.8,364.5 226.5,359.1 236.3,377.2 213.8,377.2" fill="#2d3431" opacity="0.6"/><polygon points="212.0,365.4 224.7,360.0 234.5,378.1 212.0,378.1" fill="#8a8a3a"/><polygon points="236.3,349.8 248.5,339.5 285.1,369.3 280.2,377.2 250.9,377.2" fill="#2d3431" opacity="0.6"/><polygon points="234.5,350.7 246.7,340.4 283.3,370.2 278.4,378.1 249.1,378.1" fill="#7f8a78"/><polygon points="245.6,351.8 252.9,346.9 262.7,356.6 255.3,362.7" fill="#2d3431" opacity="0.6"/><polygon points="243.8,352.7 251.1,347.8 260.9,357.5 253.5,363.6" fill="#8f9a5a"/><polygon points="257.8,364.0 267.5,359.1 277.3,371.3 270.0,377.2" fill="#2d3431" opacity="0.6"/><polygon points="256.0,364.9 265.7,360.0 275.5,372.2 268.2,378.1" fill="#6f7a6a"/><polygon points="236.4,316.0 251.1,325.8 241.3,335.6 226.7,330.7" fill="#b8b8ae"/><polyline points="213.2,214.2 232.8,228.8 257.2,248.4" fill="none" stroke="#2c4424" stroke-width="4.6" stroke-linecap="round" opacity="0.45" stroke-dasharray="0.1 3.5"/><polyline points="212.0,213.4 231.5,228.1 256.0,247.6" fill="none" stroke="#456733" stroke-width="4.4" stroke-linecap="round" stroke-dasharray="0.1 3.5"/><polyline points="220.6,194.6 240.1,209.3" fill="none" stroke="#2c4424" stroke-width="4.1" stroke-linecap="round" opacity="0.45" stroke-dasharray="0.1 3.1"/><polyline points="219.3,193.9 238.9,208.5" fill="none" stroke="#456733" stroke-width="3.9" stroke-linecap="round" stroke-dasharray="0.1 3.1"/><polyline points="281.6,204.4 286.5,189.8" fill="none" stroke="#2c4424" stroke-width="6.7" stroke-linecap="round" opacity="0.45" stroke-dasharray="0.1 5.1"/><polyline points="280.4,203.7 285.3,189.0" fill="none" stroke="#4f7239" stroke-width="6.4" stroke-linecap="round" stroke-dasharray="0.1 5.1"/><polyline points="296.3,250.8 320.7,270.4 345.2,287.5" fill="none" stroke="#2c4424" stroke-width="4.1" stroke-linecap="round" opacity="0.45" stroke-dasharray="0.1 3.1"/><polyline points="295.0,250.1 319.5,269.6 343.9,286.7" fill="none" stroke="#456733" stroke-width="3.9" stroke-linecap="round" stroke-dasharray="0.1 3.1"/><polyline points="315.8,211.7 303.6,231.3 296.3,243.5" fill="none" stroke="#2c4424" stroke-width="3.6" stroke-linecap="round" opacity="0.45" stroke-dasharray="0.1 2.7"/><polyline points="314.6,211.0 302.4,230.5 295.0,242.7" fill="none" stroke="#4f7239" stroke-width="3.4" stroke-linecap="round" stroke-dasharray="0.1 2.7"/><polyline points="330.5,202.0 345.2,214.2 359.8,219.1" fill="none" stroke="#2c4424" stroke-width="5.6" stroke-linecap="round" opacity="0.45" stroke-dasharray="0.1 4.3"/><polyline points="329.2,201.2 343.9,213.4 358.6,218.3" fill="none" stroke="#4f7239" stroke-width="5.4" stroke-linecap="round" stroke-dasharray="0.1 4.3"/><polyline points="350.0,311.9 374.5,331.4 398.9,351.0 425.3,370.5" fill="none" stroke="#2c4424" stroke-width="4.6" stroke-linecap="round" opacity="0.45" stroke-dasharray="0.1 3.5"/><polyline points="348.8,311.1 373.2,330.7 397.6,350.2 424.0,369.8" fill="none" stroke="#456733" stroke-width="4.4" stroke-linecap="round" stroke-dasharray="0.1 3.5"/><polyline points="298.7,282.6 308.5,277.7" fill="none" stroke="#2c4424" stroke-width="6.7" stroke-linecap="round" opacity="0.45" stroke-dasharray="0.1 5.1"/><polyline points="297.5,281.8 307.3,276.9" fill="none" stroke="#4f7239" stroke-width="6.4" stroke-linecap="round" stroke-dasharray="0.1 5.1"/><polyline points="281.6,346.1 296.3,341.2 306.1,336.3" fill="none" stroke="#2c4424" stroke-width="4.1" stroke-linecap="round" opacity="0.45" stroke-dasharray="0.1 3.1"/><polyline points="280.4,345.3 295.0,340.4 304.8,335.6" fill="none" stroke="#4f7239" stroke-width="3.9" stroke-linecap="round" stroke-dasharray="0.1 3.1"/><polyline points="247.4,360.7 237.7,378.8" fill="none" stroke="#2c4424" stroke-width="4.1" stroke-linecap="round" opacity="0.45" stroke-dasharray="0.1 3.1"/><polyline points="246.2,360.0 236.4,378.1" fill="none" stroke="#4f7239" stroke-width="3.9" stroke-linecap="round" stroke-dasharray="0.1 3.1"/><polyline points="311.0,370.5 328.1,377.8" fill="none" stroke="#2c4424" stroke-width="4.6" stroke-linecap="round" opacity="0.45" stroke-dasharray="0.1 3.5"/><polyline points="309.7,369.8 326.8,377.1" fill="none" stroke="#4f7239" stroke-width="4.4" stroke-linecap="round" stroke-dasharray="0.1 3.5"/><polyline points="213.2,326.5 227.9,321.7" fill="none" stroke="#2c4424" stroke-width="5.1" stroke-linecap="round" opacity="0.45" stroke-dasharray="0.1 3.9"/><polyline points="212.0,325.8 226.7,320.9" fill="none" stroke="#4f7239" stroke-width="4.9" stroke-linecap="round" stroke-dasharray="0.1 3.9"/><polyline points="340.3,341.2 350.0,355.8" fill="none" stroke="#2c4424" stroke-width="4.6" stroke-linecap="round" opacity="0.45" stroke-dasharray="0.1 3.5"/><polyline points="339.0,340.4 348.8,355.1" fill="none" stroke="#4f7239" stroke-width="4.4" stroke-linecap="round" stroke-dasharray="0.1 3.5"/><polygon points="243.5,113.6 257.5,106.7 271.4,129.9 266.8,146.2 252.8,148.5" fill="#6f7476"/><polygon points="280.7,143.9 313.3,136.9 324.0,160.1 324.0,183.4 290.0,178.7" fill="#8a8f90"/><polygon points="236.0,177.8 245.3,169.7 266.3,182.5 280.2,194.1 273.2,204.6 254.6,194.1 243.0,187.1" fill="#2d3431" opacity="0.6"/><polygon points="234.2,178.7 243.5,170.6 264.5,183.4 278.4,195.0 271.4,205.5 252.8,195.0 241.2,188.0" fill="#7a8490"/><polygon points="245.3,177.8 251.1,173.2 263.9,182.5 258.1,188.3" fill="#2d3431" opacity="0.6"/><polygon points="243.5,178.7 249.3,174.1 262.1,183.4 256.3,189.2" fill="#9aa4b0"/><polygon points="243.0,201.1 250.0,195.3 272.1,209.2 266.3,216.2" fill="#2d3431" opacity="0.6"/><polygon points="241.2,202.0 248.2,196.2 270.3,210.1 264.5,217.1" fill="#5f6876"/><polygon points="257.0,149.9 266.3,144.1 274.4,153.4 266.3,159.2" fill="#2d3431" opacity="0.6"/><polygon points="255.2,150.8 264.5,145.0 272.6,154.3 264.5,160.1" fill="#7a8088"/><polygon points="231.4,136.0 240.7,126.7 252.3,134.8 244.2,145.3" fill="#2d3431" opacity="0.6"/><polygon points="229.6,136.9 238.9,127.6 250.5,135.7 242.4,146.2" fill="#8a8d8c"/><polygon points="263.9,168.5 273.2,165.1 277.9,172.0 268.6,175.5" fill="#2d3431" opacity="0.6"/><polygon points="262.1,169.4 271.4,166.0 276.1,172.9 266.8,176.4" fill="#c9a98a"/><polygon points="212.8,163.9 224.4,151.1 244.2,163.9 232.5,177.8" fill="#2d3431" opacity="0.6"/><polygon points="211.0,164.8 222.6,152.0 242.4,164.8 230.7,178.7" fill="#c5c6c2"/><polygon points="202.3,179.0 208.1,170.9 225.6,181.3 219.8,189.5" fill="#2d3431" opacity="0.6"/><polygon points="200.5,179.9 206.3,171.8 223.8,182.2 218.0,190.4" fill="#d9d2c0"/><polygon points="105.8,154.6 119.8,159.2 124.4,170.9 110.5,194.1 105.8,191.8" fill="#2d3431" opacity="0.6"/><polygon points="104.0,155.5 118.0,160.1 122.6,171.8 108.7,195.0 104.0,192.7" fill="#6a7074"/><polygon points="187.2,281.1 210.5,243.0 223.2,240.6 224.4,249.9 198.8,281.1" fill="#2d3431" opacity="0.6"/><polygon points="185.4,282.0 208.7,243.9 221.4,241.5 222.6,250.8 197.0,282.0" fill="#d9dad4"/><polygon points="221.4,241.5 230.7,247.3 213.3,282.0 202.8,282.0" fill="#3a3f3e"/><polygon points="215.1,281.1 231.4,252.3 250.0,261.6 245.3,281.1" fill="#2d3431" opacity="0.6"/><polygon points="213.3,282.0 229.6,253.2 248.2,262.5 243.5,282.0" fill="#626b74"/><polygon points="229.1,254.6 238.4,249.9 250.0,259.2 243.0,266.2" fill="#2d3431" opacity="0.6"/><polygon points="227.3,255.5 236.6,250.8 248.2,260.1 241.2,267.1" fill="#e0e0da"/><polygon points="235.4,256.7 239.3,254.3 242.6,257.3 238.9,260.1" fill="#a0603a"/><polyline points="149.4,179.5 175.0,193.4 207.6,212.1" fill="none" stroke="#2c4424" stroke-width="6.8" stroke-linecap="round" opacity="0.45" stroke-dasharray="0.1 5.2"/><polyline points="148.2,178.7 173.8,192.7 206.3,211.3" fill="none" stroke="#4f7239" stroke-width="6.5" stroke-linecap="round" stroke-dasharray="0.1 5.2"/><polyline points="155.2,192.3 179.7,205.1 198.3,216.7" fill="none" stroke="#2c4424" stroke-width="5.9" stroke-linecap="round" opacity="0.45" stroke-dasharray="0.1 4.5"/><polyline points="154.0,191.5 178.4,204.3 197.0,216.0" fill="none" stroke="#456733" stroke-width="5.6" stroke-linecap="round" stroke-dasharray="0.1 4.5"/><polyline points="207.6,214.4 235.5,233.0 263.4,251.6" fill="none" stroke="#2c4424" stroke-width="5.4" stroke-linecap="round" opacity="0.45" stroke-dasharray="0.1 4.1"/><polyline points="206.3,213.6 234.2,232.2 262.1,250.8" fill="none" stroke="#4f7239" stroke-width="5.1" stroke-linecap="round" stroke-dasharray="0.1 4.1"/><polyline points="214.6,195.8 235.5,202.8" fill="none" stroke="#2c4424" stroke-width="5.9" stroke-linecap="round" opacity="0.45" stroke-dasharray="0.1 4.5"/><polyline points="213.3,195.0 234.2,202.0" fill="none" stroke="#4f7239" stroke-width="5.6" stroke-linecap="round" stroke-dasharray="0.1 4.5"/><polyline points="268.0,130.7 273.9,149.3 277.3,163.2" fill="none" stroke="#2c4424" stroke-width="4.4" stroke-linecap="round" opacity="0.45" stroke-dasharray="0.1 3.3"/><polyline points="266.8,129.9 272.6,148.5 276.1,162.5" fill="none" stroke="#456733" stroke-width="4.2" stroke-linecap="round" stroke-dasharray="0.1 3.3"/><polyline points="282.0,179.5 285.5,195.8 284.3,212.1" fill="none" stroke="#2c4424" stroke-width="5.9" stroke-linecap="round" opacity="0.45" stroke-dasharray="0.1 4.5"/><polyline points="280.7,178.7 284.2,195.0 283.1,211.3" fill="none" stroke="#4f7239" stroke-width="5.6" stroke-linecap="round" stroke-dasharray="0.1 4.5"/><polyline points="254.1,270.2 263.4,253.9" fill="none" stroke="#2c4424" stroke-width="6.8" stroke-linecap="round" opacity="0.45" stroke-dasharray="0.1 5.2"/><polyline points="252.8,269.4 262.1,253.2" fill="none" stroke="#4f7239" stroke-width="6.5" stroke-linecap="round" stroke-dasharray="0.1 5.2"/></g><rect width="423" height="378" filter="url(#mn)" opacity="0.36"/><rect width="423" height="378" filter="url(#mn2)" opacity="0.32"/></svg></div>
  <div class="h" style="left:27px;top:404.50px;transform:scaleX(0.9741)">WÄHLEN SIE EINE GELÄNDEKATEGORIE</div>
  <div class="timg" style="left:27px;top:424px"><svg width="99" height="74.5" viewBox="0 0 98.7 74.5" preserveAspectRatio="none"><defs><linearGradient id="sk0" x1="0" y1="0" x2="1" y2="0"><stop offset="0" stop-color="#9fdcf1"/><stop offset="0.7" stop-color="#cdeef8"/><stop offset="1" stop-color="#f3e6cf"/></linearGradient></defs><rect x="0" y="0" width="98.7" height="14" fill="url(#sk0)"/><circle cx="91.9" cy="13.8" r="7.6" fill="#f0a13c" stroke="#b8742a" stroke-width="0.3"/><rect x="89.2" y="10.8" width="4.9" height="0.9" fill="#e0452a"/><rect x="0.0" y="13.0" width="98.7" height="30.9" fill="#1fb3e6"/><polygon points="0.0,12.8 98.7,13.3 98.7,15.9 64.2,14.9 30.6,15.7 0.0,15.1" fill="#1b6aa5"/><polygon points="88.1,15.2 98.7,14.6 98.7,16.8 91.3,18.4" fill="#1b5f98"/><polygon points="0.0,16.8 98.7,16.4 98.7,20.3 0.0,20.7" fill="#27bdeb"/><polygon points="7.8,20.7 59.9,21.4 98.7,20.3 98.7,23.5 65.3,24.2 7.8,22.9" fill="#0d86c8"/><polygon points="0.0,23.5 98.7,24.2 98.7,29.6 0.0,29.0" fill="#16b6ea"/><polygon points="16.5,29.6 40.3,29.0 98.7,30.0 98.7,33.1 46.9,32.5 16.5,31.8" fill="#3f8fc6"/><polygon points="27.3,33.1 98.7,33.3 98.7,43.4 70.7,42.0 43.6,38.0" fill="#c4eaf8"/><polygon points="44.7,34.4 98.7,33.9 98.7,36.1 59.9,36.3" fill="#7fcdec"/><polyline points="84.8,41.2 91.3,39.6 98.7,38.5" fill="none" stroke="#6d8a96" stroke-width="0.5"/><polygon points="0.0,28.2 16.5,32.5 43.6,38.0 70.7,42.0 98.7,43.6 98.7,59.3 70.7,58.2 43.6,55.5 21.9,51.7 0.0,42.8" fill="#f2d7a3" stroke="#3b3a36" stroke-width="0.35"/><polygon points="0.0,28.2 16.5,32.5 43.6,38.0 70.7,42.0 98.7,43.6 98.7,46.1 70.7,45.0 43.6,41.2 16.5,35.8 0.0,32.0" fill="#f0c98a"/><polygon points="27.3,46.1 70.7,51.5 98.7,53.7 98.7,55.9 70.7,54.6 27.3,49.1" fill="#f8e6c2"/><polyline points="0.0,36.9 21.9,40.7 62.0,46.1 98.7,51.5" fill="none" stroke="#8a7450" stroke-width="0.3"/><polygon points="0.0,42.8 21.9,51.7 43.6,55.5 70.7,58.2 98.7,59.3 98.7,61.5 70.7,60.4 43.6,57.7 21.9,54.3 0.0,46.3" fill="#8b8a85" stroke="#3b3a36" stroke-width="0.35"/><polygon points="0.0,46.3 21.9,54.3 26.2,55.4 10.5,74.5 0.0,74.8" fill="#6ba887" stroke="#3b3a36" stroke-width="0.35"/><polygon points="0.0,46.3 7.8,49.3 1.3,52.6 0.0,52.6" fill="#55796a"/><polygon points="26.2,55.4 34.1,56.1 20.4,74.5 10.5,74.5" fill="#dcc07f" stroke="#3b3a36" stroke-width="0.35"/><polygon points="34.1,56.1 46.9,57.2 37.1,74.5 20.4,74.5" fill="#417f62" stroke="#3b3a36" stroke-width="0.35"/><polygon points="46.9,57.2 59.9,58.2 53.4,74.5 37.1,74.5" fill="#e0c78a" stroke="#3b3a36" stroke-width="0.35"/><polygon points="59.9,58.2 76.4,59.3 74.5,74.5 53.4,74.5" fill="#62a27b" stroke="#3b3a36" stroke-width="0.35"/><polygon points="76.4,59.3 98.7,60.4 98.7,74.8 74.5,74.5" fill="#a9cdb9" stroke="#3b3a36" stroke-width="0.35"/><circle cx="53.9" cy="66.9" r="2.6" fill="#b5a67c" stroke="#3b3a36" stroke-width="0.3"/><circle cx="72.3" cy="72.3" r="2.0" fill="#b5a67c" stroke="#3b3a36" stroke-width="0.3"/><polygon points="5.6,66.7 7.8,73.2 9.4,70.0" fill="#2f6b55"/><polygon points="10.0,62.4 12.1,70.0 14.9,65.6" fill="#2f6b55"/><polygon points="13.8,55.9 15.9,64.5 18.1,60.2" fill="#2f6b55"/><polyline points="20.0,2.2 23.2,6.0 24.3,8.4 26.5,6.4" fill="none" stroke="#4a5a5a" stroke-width="0.5"/><polyline points="47.7,4.7 49.6,6.6 50.7,5.1" fill="none" stroke="#4a5a5a" stroke-width="0.5"/><polyline points="56.1,1.4 57.7,3.1 59.7,1.4" fill="none" stroke="#4a5a5a" stroke-width="0.5"/></svg></div>
  <div class="rad" style="left:136.8px;top:423.0px"></div>
  <div class="rl" style="left:156.8px;top:425.8px">Geländekategorie 0</div>
  <div class="rd" style="left:137.3px;top:446.5px">Meer, Küstengebiet, das dem offenen Meer<br>ausgesetzt ist.</div>
  <div class="timg" style="left:314px;top:424px"><svg width="99" height="74.5" viewBox="0 0 98.7 74.5" preserveAspectRatio="none"><defs><linearGradient id="sk1" x1="0" y1="0" x2="1" y2="0"><stop offset="0" stop-color="#92d8f1"/><stop offset="0.72" stop-color="#c6ebf7"/><stop offset="0.86" stop-color="#eadfcc"/><stop offset="1" stop-color="#f5d9ad"/></linearGradient></defs><rect x="0" y="0" width="98.7" height="8" fill="url(#sk1)"/><rect x="0.0" y="6.8" width="98.7" height="20.8" fill="#a4a9ad"/><polygon points="0.0,6.8 98.7,7.3 98.7,9.0 0.0,8.4" fill="#6e6f72"/><polygon points="46.9,9.8 98.7,9.2 98.7,12.5 55.5,13.0" fill="#6fa88b"/><polygon points="0.0,11.4 23.0,10.3 25.2,13.6 0.0,16.8" fill="#8a8e94"/><polygon points="0.0,14.6 19.7,11.4 21.9,12.5 0.0,16.8" fill="#76aa8e"/><polygon points="26.2,11.4 33.8,12.5 40.3,18.4 27.3,19.0" fill="#e9c88f" stroke="#3b3a36" stroke-width="0.35"/><polygon points="33.8,12.5 45.8,14.1 51.2,16.8 40.3,18.4" fill="#dfe3e6"/><polygon points="49.0,12.5 65.3,13.6 64.2,15.7 51.2,15.2" fill="#9ccbb4"/><polygon points="65.3,13.0 98.7,12.5 98.7,16.3 70.7,15.7" fill="#8e9297"/><polygon points="0.0,16.8 16.5,16.3 19.7,19.5 0.0,21.7" fill="#8e9297" stroke="#3b3a36" stroke-width="0.35"/><polygon points="15.4,16.3 26.2,15.2 27.3,19.2 19.7,19.5" fill="#74a98c"/><polygon points="29.5,19.2 55.5,15.7 70.7,16.3 70.7,20.6 30.6,21.7" fill="#f4dcb4" stroke="#3b3a36" stroke-width="0.35"/><polygon points="66.4,16.3 98.7,16.8 98.7,19.5 70.7,20.6" fill="#f1d9b3"/><polygon points="0.0,24.4 25.2,20.1 29.5,21.7 21.9,26.8 0.0,26.8" fill="#f3dbac" stroke="#3b3a36" stroke-width="0.35"/><polygon points="24.1,26.1 29.5,21.7 66.4,21.1 97.8,34.4 92.4,36.0 46.9,27.7" fill="#f7f0da" stroke="#3b3a36" stroke-width="0.35"/><polygon points="66.4,21.1 98.7,19.0 98.7,34.4" fill="#c2c7c1"/><polyline points="69.6,21.1 98.7,30.9" fill="none" stroke="#f4f4ee" stroke-width="0.6"/><polyline points="74.5,20.8 98.7,28.5" fill="none" stroke="#f4f4ee" stroke-width="0.6"/><polyline points="79.4,20.5 98.7,26.1" fill="none" stroke="#f4f4ee" stroke-width="0.6"/><polyline points="84.3,20.2 98.7,23.8" fill="none" stroke="#f4f4ee" stroke-width="0.6"/><polyline points="89.2,19.8 98.7,21.4" fill="none" stroke="#f4f4ee" stroke-width="0.6"/><polygon points="0.0,26.8 21.9,26.8 46.9,27.7 70.7,33.3 36.0,36.6 0.0,30.0" fill="#e9c086" stroke="#3b3a36" stroke-width="0.35"/><polygon points="38.2,36.6 70.7,33.3 77.4,35.5 53.4,39.8" fill="#f4e7ce" stroke="#3b3a36" stroke-width="0.35"/><polygon points="0.0,30.0 36.0,36.6 45.8,39.8 0.0,49.6" fill="#a8cebf" stroke="#3b3a36" stroke-width="0.35"/><polyline points="1.3,38.5 16.5,36.3 30.6,38.0" fill="none" stroke="#86b09f" stroke-width="0.5"/><polygon points="53.4,39.8 77.4,35.5 98.7,38.7 98.7,49.6 83.7,48.5 65.3,42.0" fill="#80ae95" stroke="#3b3a36" stroke-width="0.35"/><polygon points="92.4,36.0 97.8,34.4 98.7,34.7 98.7,38.7" fill="#f3dbac"/><polygon points="0.0,49.6 53.4,40.2 65.3,42.0 0.0,60.4" fill="#e4af70" stroke="#3b3a36" stroke-width="0.35"/><polygon points="0.0,60.4 65.3,42.0 83.7,48.5 8.9,74.5 0.0,74.5" fill="#e9cd8e" stroke="#3b3a36" stroke-width="0.35"/><polygon points="8.9,74.5 83.7,48.5 98.7,51.7 98.7,74.8" fill="#9db193" stroke="#3b3a36" stroke-width="0.35"/><polygon points="53.4,62.4 83.7,49.3 98.7,51.7 98.7,62.9 61.0,62.6" fill="#86b497"/><polyline points="19.7,71.6 55.5,60.2" fill="none" stroke="#6f7d66" stroke-width="0.5"/><polyline points="34.9,71.0 52.3,65.1" fill="none" stroke="#6f7d66" stroke-width="0.5"/><polygon points="61.0,62.6 98.7,63.1 98.7,71.3 81.6,68.0 72.9,66.9" fill="#1fb3e6" stroke="#1b6aa5" stroke-width="0.35"/><polygon points="81.6,67.2 98.7,68.0 98.7,71.3" fill="#8fd6f2"/><polygon points="58.8,46.1 64.2,43.4 68.5,46.1 63.1,49.3" fill="#d63b2b" stroke="#3b3a36" stroke-width="0.35"/><polygon points="68.5,48.3 74.5,46.6 75.6,49.9 70.7,51.7" fill="#d63b2b" stroke="#3b3a36" stroke-width="0.35"/><polygon points="58.8,46.1 63.1,49.3 63.1,50.7 59.0,47.8" fill="#f6efe2" stroke="#3b3a36" stroke-width="0.35"/><polygon points="64.2,49.3 70.7,51.7 70.7,52.8 64.8,50.7" fill="#f6efe2" stroke="#3b3a36" stroke-width="0.35"/><polygon points="8.6,57.5 8.4,53.1 9.4,51.0 10.3,53.7 10.1,57.5" fill="#335f52"/><polygon points="13.4,56.9 13.2,52.6 14.3,50.4 15.2,53.1 15.0,56.9" fill="#335f52"/><polygon points="16.2,56.1 15.9,51.7 17.0,49.6 17.9,52.3 17.7,56.1" fill="#335f52"/><polygon points="19.1,55.3 18.9,51.0 20.0,48.8 20.8,51.5 20.6,55.3" fill="#335f52"/><polygon points="7.7,48.5 7.6,45.2 8.7,43.3 9.8,45.4 9.5,48.5" fill="#a59b74" stroke="#3b3a36" stroke-width="0.2"/><polygon points="11.2,47.6 11.1,44.4 12.1,42.4 13.2,44.6 13.0,47.6" fill="#a59b74" stroke="#3b3a36" stroke-width="0.2"/><polygon points="13.6,46.3 13.4,43.1 14.5,41.1 15.6,43.3 15.4,46.3" fill="#a59b74" stroke="#3b3a36" stroke-width="0.2"/><polygon points="29.9,42.5 29.8,39.3 30.9,37.3 32.0,39.5 31.8,42.5" fill="#a59b74" stroke="#3b3a36" stroke-width="0.2"/><polygon points="36.1,41.8 36.0,38.5 37.1,36.6 38.2,38.7 38.0,41.8" fill="#a59b74" stroke="#3b3a36" stroke-width="0.2"/><polygon points="40.5,40.3 40.3,37.1 41.4,35.1 42.5,37.3 42.3,40.3" fill="#a59b74" stroke="#3b3a36" stroke-width="0.2"/><circle cx="50.1" cy="45.9" r="1.8" fill="#c9cfae" stroke="#3b3a36" stroke-width="0.3"/><circle cx="78.5" cy="57.7" r="2.2" fill="#d2c3a0" stroke="#3b3a36" stroke-width="0.3"/><circle cx="23.5" cy="68.0" r="2.2" fill="#2f6b55"/><circle cx="89.7" cy="60.7" r="1.7" fill="#4f8a6c"/><rect x="74.8" y="64.5" width="3.5" height="5.4" fill="#a59b74"/><polyline points="21.9,1.1 24.3,3.3 26.2,5.4 27.5,4.0" fill="none" stroke="#4a6a5a" stroke-width="0.5"/><polyline points="47.9,2.7 49.9,4.7 51.2,3.1" fill="none" stroke="#4a6a5a" stroke-width="0.5"/><polyline points="56.8,0.3 58.1,1.6 59.0,0.3" fill="none" stroke="#4a6a5a" stroke-width="0.5"/></svg></div>
  <div class="rad" style="left:423.8px;top:423.0px"></div>
  <div class="rl" style="left:443.8px;top:425.8px">Geländekategorie 1</div>
  <div class="rd" style="left:424.3px;top:446.5px">Seen oder Gebiete mit vernachlässigbarer<br>Vegetation und ohne Hindernisse.</div>
  <div class="timg" style="left:27px;top:504.3px"><svg width="99" height="74.5" viewBox="0 0 98.7 74.5" preserveAspectRatio="none"><defs><linearGradient id="sk2" x1="0" y1="0" x2="0" y2="1"><stop offset="0" stop-color="#e6f6fb"/><stop offset="1" stop-color="#63cdf0"/></linearGradient></defs><rect x="0" y="0" width="98.7" height="6.2" fill="url(#sk2)"/><rect x="0.0" y="6.0" width="98.5" height="68.0" fill="#3f9168"/><polygon points="0.0,6.0 98.5,6.0 98.5,7.8 0.0,7.4" fill="#3a4440"/><polygon points="0.0,7.4 27.1,7.8 20.6,11.9 0.0,13.0" fill="#c3c7cc"/><polygon points="30.4,7.8 55.3,8.5 55.3,10.8 44.5,11.9" fill="#aeb3b9"/><polygon points="55.3,6.5 98.5,7.0 98.5,9.2 59.7,9.8" fill="#d9c7a0"/><polygon points="59.7,9.2 98.5,8.7 98.5,11.9 64.0,13.0" fill="#2f7d57"/><polygon points="7.6,11.9 22.8,10.3 20.6,13.6 8.7,14.6" fill="#e6e8ea"/><polygon points="26.0,11.9 30.4,9.8 39.0,16.8 26.0,17.4" fill="#1f9158"/><polygon points="28.2,10.3 38.0,11.9 46.6,15.7 40.1,16.8" fill="#e2e4e6"/><polygon points="48.8,11.4 62.9,11.9 62.9,14.6 49.9,14.3" fill="#e8e9ea"/><polygon points="67.2,14.1 83.5,14.3 83.5,17.4 69.4,17.1" fill="#ecd9b6"/><polygon points="83.5,13.6 98.5,13.9 98.5,16.3 84.6,16.5" fill="#d4d7da"/><polygon points="15.7,14.6 26.0,14.6 26.0,17.4 16.3,17.4" fill="#e8e9ea"/><polygon points="0.0,13.0 15.2,15.2 15.2,17.9 0.0,19.0" fill="#2f7d57"/><polygon points="30.4,17.9 55.3,15.7 92.2,16.8 92.2,19.0 64.0,20.1 40.1,20.8" fill="#dfe6e2"/><polygon points="0.0,20.1 27.1,18.4 30.4,20.8 9.8,24.1 0.0,24.1" fill="#49a071"/><polygon points="27.1,20.8 64.0,20.4 59.7,23.3 26.0,22.8" fill="#2d6f50"/><polygon points="59.7,21.1 95.4,19.0 96.5,21.1 65.1,23.3" fill="#edd7b2"/><polygon points="22.8,23.6 42.3,22.8 64.0,24.1 64.0,25.5 22.8,26.0" fill="#edd7b2"/><polygon points="65.1,24.9 94.4,24.1 94.4,26.6 66.2,26.9" fill="#e9d9b8"/><polygon points="0.0,27.1 53.1,24.9 53.1,31.5 30.4,32.5 0.0,28.2" fill="#4da072"/><polygon points="55.3,27.1 98.5,28.2 98.5,36.9 59.7,32.5" fill="#3a8a62"/><polygon points="0.0,28.7 30.4,34.9 30.9,39.0 16.3,41.2 0.0,41.8" fill="#ead4ad" stroke="#3b3a36" stroke-width="0.35"/><polyline points="0.0,30.9 29.3,36.0" fill="none" stroke="#c9b48d" stroke-width="0.3"/><polyline points="0.0,32.9 29.3,36.7" fill="none" stroke="#c9b48d" stroke-width="0.3"/><polyline points="0.0,34.8 29.3,37.3" fill="none" stroke="#c9b48d" stroke-width="0.3"/><polyline points="0.0,36.8 29.3,38.0" fill="none" stroke="#c9b48d" stroke-width="0.3"/><polyline points="0.0,38.7 29.3,38.6" fill="none" stroke="#c9b48d" stroke-width="0.3"/><polygon points="46.6,36.9 53.1,32.5 98.5,37.4 98.5,47.7 79.2,42.3 59.7,39.0" fill="#4da575"/><polygon points="0.0,46.6 30.4,43.4 45.6,38.5 59.7,39.0 46.6,43.4 38.0,46.6 0.0,54.8" fill="#3b8c63"/><polygon points="0.0,54.8 38.0,48.8 38.0,52.6 0.0,61.3" fill="#4a9a6f"/><polygon points="0.0,61.3 38.0,52.1 58.6,50.4 79.2,58.8 35.8,74.0 0.0,74.0" fill="#f1dcb7" stroke="#3b3a36" stroke-width="0.35"/><polyline points="27.1,60.7 55.3,52.1" fill="none" stroke="#c9b594" stroke-width="0.3"/><polyline points="28.2,62.0 57.3,53.1" fill="none" stroke="#c9b594" stroke-width="0.3"/><polyline points="29.3,63.3 59.2,54.2" fill="none" stroke="#c9b594" stroke-width="0.3"/><polyline points="30.4,64.6 61.2,55.3" fill="none" stroke="#c9b594" stroke-width="0.3"/><polyline points="31.5,65.9 63.1,56.4" fill="none" stroke="#c9b594" stroke-width="0.3"/><polyline points="32.5,67.2 65.1,57.5" fill="none" stroke="#c9b594" stroke-width="0.3"/><polygon points="59.7,50.4 81.3,45.0 92.2,49.0 81.3,58.8" fill="#e3b673" stroke="#3b3a36" stroke-width="0.35"/><polygon points="35.8,74.0 81.3,59.1 98.5,65.6 98.5,74.0" fill="#4d9b6f" stroke="#3b3a36" stroke-width="0.35"/><polyline points="61.8,74.0 85.7,62.0" fill="none" stroke="#2f7353" stroke-width="0.4"/><polyline points="67.2,74.0 88.4,63.1" fill="none" stroke="#2f7353" stroke-width="0.4"/><polyline points="72.7,74.0 91.1,64.2" fill="none" stroke="#2f7353" stroke-width="0.4"/><polyline points="78.1,74.0 93.8,65.3" fill="none" stroke="#2f7353" stroke-width="0.4"/><polyline points="83.5,74.0 96.5,66.4" fill="none" stroke="#2f7353" stroke-width="0.4"/><polygon points="83.5,58.6 98.5,54.2 98.5,65.6" fill="#2b9058" stroke="#3b3a36" stroke-width="0.35"/><polygon points="36.9,47.7 43.4,45.0 51.0,47.2 51.0,52.1 42.3,52.9 36.9,52.3" fill="#ecd49f" stroke="#3b3a36" stroke-width="0.35"/><polygon points="41.8,45.0 48.8,44.1 51.2,47.9 43.9,48.8" fill="#d9463c" stroke="#3b3a36" stroke-width="0.35"/><polygon points="50.4,43.4 56.4,42.5 58.6,46.6 52.1,47.5" fill="#e0392c" stroke="#3b3a36" stroke-width="0.35"/><polygon points="51.5,47.5 58.6,46.6 59.1,49.3 52.1,50.4" fill="#f1dfbb" stroke="#3b3a36" stroke-width="0.35"/><rect x="43.9" y="40.7" width="3.8" height="4.0" fill="#ecd49f" stroke="#3b3a36" stroke-width="0.3"/><circle cx="45.8" cy="40.3" r="1.7" fill="#d9463c" stroke="#3b3a36" stroke-width="0.3"/><polygon points="36.3,49.9 39.6,49.3 40.1,52.6 36.9,52.9" fill="#d9463c"/><circle cx="3.8" cy="43.9" r="2.2" fill="#a9a98a" stroke="#3b3a36" stroke-width="0.2"/><circle cx="9.2" cy="43.4" r="2.2" fill="#3f8a66" stroke="#3b3a36" stroke-width="0.2"/><circle cx="14.6" cy="43.4" r="2.2" fill="#3f8a66" stroke="#3b3a36" stroke-width="0.2"/><circle cx="20.6" cy="42.5" r="2.2" fill="#3f8a66" stroke="#3b3a36" stroke-width="0.2"/><circle cx="27.1" cy="40.1" r="2.2" fill="#a9a98a" stroke="#3b3a36" stroke-width="0.2"/><circle cx="32.0" cy="37.4" r="2.2" fill="#3f8a66" stroke="#3b3a36" stroke-width="0.2"/><circle cx="35.2" cy="35.2" r="2.2" fill="#3f8a66" stroke="#3b3a36" stroke-width="0.2"/><circle cx="2.7" cy="58.0" r="2.6" fill="#3f8a66" stroke="#3b3a36" stroke-width="0.2"/><circle cx="10.3" cy="56.4" r="2.6" fill="#a9a98a" stroke="#3b3a36" stroke-width="0.2"/><circle cx="17.4" cy="55.5" r="2.6" fill="#a9a98a" stroke="#3b3a36" stroke-width="0.2"/><circle cx="23.9" cy="54.8" r="2.6" fill="#3f8a66" stroke="#3b3a36" stroke-width="0.2"/><circle cx="29.3" cy="53.1" r="2.6" fill="#3f8a66" stroke="#3b3a36" stroke-width="0.2"/><circle cx="33.1" cy="52.3" r="2.6" fill="#3f8a66" stroke="#3b3a36" stroke-width="0.2"/><circle cx="42.3" cy="71.0" r="3.0" fill="#3f8a66" stroke="#3b3a36" stroke-width="0.2"/><circle cx="50.4" cy="68.9" r="3.0" fill="#3f8a66" stroke="#3b3a36" stroke-width="0.2"/><circle cx="55.3" cy="66.2" r="3.0" fill="#c9bf98" stroke="#3b3a36" stroke-width="0.2"/><circle cx="59.7" cy="65.1" r="3.0" fill="#a9a98a" stroke="#3b3a36" stroke-width="0.2"/><circle cx="65.6" cy="62.4" r="3.0" fill="#3f8a66" stroke="#3b3a36" stroke-width="0.2"/><circle cx="87.9" cy="54.8" r="3.0" fill="#3f8a66" stroke="#3b3a36" stroke-width="0.2"/><circle cx="94.4" cy="51.5" r="3.0" fill="#b0ad90" stroke="#3b3a36" stroke-width="0.2"/><polygon points="58.4,46.1 58.4,41.8 59.7,39.0 61.0,42.1 61.0,46.1" fill="#8c9a78" stroke="#3b3a36" stroke-width="0.2"/><polygon points="61.1,45.0 61.1,40.7 62.4,38.0 63.7,41.0 63.7,45.0" fill="#8c9a78" stroke="#3b3a36" stroke-width="0.2"/><polygon points="63.8,46.6 63.8,42.3 65.1,39.6 66.4,42.6 66.4,46.6" fill="#8c9a78" stroke="#3b3a36" stroke-width="0.2"/><polygon points="69.2,46.1 69.2,41.8 70.5,39.0 71.8,42.1 71.8,46.1" fill="#8c9a78" stroke="#3b3a36" stroke-width="0.2"/><polygon points="74.1,45.6 74.1,41.2 75.4,38.5 76.7,41.5 76.7,45.6" fill="#8c9a78" stroke="#3b3a36" stroke-width="0.2"/><circle cx="23.9" cy="31.5" r="1.3" fill="#c94a3a"/><circle cx="27.7" cy="32.0" r="1.3" fill="#c94a3a"/><circle cx="33.1" cy="32.0" r="1.3" fill="#c94a3a"/><circle cx="40.1" cy="31.2" r="1.3" fill="#c94a3a"/><circle cx="44.5" cy="35.8" r="1.3" fill="#c94a3a"/><circle cx="48.3" cy="34.2" r="1.3" fill="#c94a3a"/><rect x="60.5" y="29.3" width="2.6" height="3.3" fill="#5b5a44"/><rect x="69.2" y="29.8" width="2.6" height="3.3" fill="#5b5a44"/><rect x="76.2" y="30.4" width="2.6" height="3.3" fill="#5b5a44"/><rect x="81.7" y="30.9" width="2.6" height="3.3" fill="#5b5a44"/><rect x="89.8" y="32.5" width="2.6" height="3.3" fill="#5b5a44"/><circle cx="58.0" cy="26.6" r="1.0" fill="#c94a3a"/><circle cx="83.5" cy="24.4" r="1.0" fill="#c94a3a"/><circle cx="86.8" cy="24.7" r="1.0" fill="#c94a3a"/><circle cx="90.0" cy="24.1" r="1.0" fill="#c94a3a"/></svg></div>
  <div class="rad" style="left:136.8px;top:504.0px"></div>
  <div class="rl" style="left:156.8px;top:506.8px">Geländekategorie 2</div>
  <div class="rd" style="left:137.3px;top:527.5px">Gebiet mit geringer Vegetation wie Gras<br>und isolierten Hindernissen (Bäume,<br>Gebäude) mit Abständen von mindestens<br>20 Hindernishöhen.</div>
  <div class="timg" style="left:314px;top:504.3px"><svg width="99" height="74.5" viewBox="0 0 98.7 74.5" preserveAspectRatio="none"><defs><linearGradient id="sk3" x1="0" y1="0" x2="0" y2="1"><stop offset="0" stop-color="#eef8fc"/><stop offset="1" stop-color="#6ccff0"/></linearGradient></defs><rect x="0" y="0" width="98.7" height="7" fill="url(#sk3)"/><rect x="0.0" y="6.3" width="98.5" height="67.7" fill="#2f8a5a"/><polygon points="0.0,6.3 98.5,6.3 98.5,8.5 0.0,9.2" fill="#4a6a50"/><polygon points="13.0,15.2 30.4,13.6 31.5,15.7 15.2,17.4" fill="#e5d2a2"/><polygon points="0.0,22.8 11.9,15.2 13.6,17.4 6.5,28.2 0.0,29.3" fill="#bfae8a"/><polygon points="53.1,21.1 77.0,14.1 78.6,15.7 57.5,24.1" fill="#e5d2a2" stroke="#3b3a36" stroke-width="0.2"/><polygon points="90.0,10.8 94.9,9.8 94.9,17.4 88.9,18.4" fill="#e5d2a2"/><polygon points="72.7,27.1 96.5,26.0 96.5,31.5 73.8,31.5" fill="#e5d2a2" stroke="#3b3a36" stroke-width="0.2"/><polygon points="77.0,24.4 98.5,24.1 98.5,27.1 78.1,27.1" fill="#1f8048"/><polygon points="24.9,31.5 36.9,28.2 38.0,31.5 27.1,35.2" fill="#e5d2a2"/><polygon points="59.7,31.5 98.5,32.0 98.5,35.2 59.7,35.2" fill="#1f8048"/><polygon points="10.8,17.9 30.4,16.3 40.1,17.4 27.1,21.1 13.0,21.7" fill="#5aa57c"/><polygon points="1.1,6.0 10.8,5.4 11.9,9.8 2.2,10.8" fill="#dc4a32" stroke="#3b3a36" stroke-width="0.25"/><polygon points="0.5,13.0 7.6,12.5 8.1,17.4 0.5,17.9" fill="#dc4a32" stroke="#3b3a36" stroke-width="0.25"/><polygon points="1.1,21.7 4.9,20.1 7.0,23.3 3.8,24.9" fill="#dc4a32" stroke="#3b3a36" stroke-width="0.25"/><polygon points="39.0,10.8 49.9,10.3 51.0,13.6 40.1,14.1" fill="#dc4a32" stroke="#3b3a36" stroke-width="0.25"/><polygon points="33.6,6.0 41.2,6.0 42.3,8.7 34.2,8.9" fill="#dc4a32" stroke="#3b3a36" stroke-width="0.25"/><polygon points="56.4,11.9 64.0,11.4 65.6,14.6 58.0,15.2" fill="#dc4a32" stroke="#3b3a36" stroke-width="0.25"/><polygon points="41.2,16.8 51.0,15.7 52.6,19.0 42.8,20.4" fill="#dc4a32" stroke="#3b3a36" stroke-width="0.25"/><polygon points="13.6,20.8 26.0,20.1 27.1,23.6 14.6,24.4" fill="#dc4a32" stroke="#3b3a36" stroke-width="0.25"/><polygon points="26.6,19.7 39.0,19.0 40.7,22.2 28.2,22.8" fill="#dc4a32" stroke="#3b3a36" stroke-width="0.25"/><polygon points="70.5,17.9 79.2,17.4 81.3,21.7 72.1,22.6" fill="#dc4a32" stroke="#3b3a36" stroke-width="0.25"/><polygon points="78.1,11.4 85.7,10.8 86.8,14.1 79.2,14.6" fill="#dc4a32" stroke="#3b3a36" stroke-width="0.25"/><polygon points="45.6,24.1 55.3,22.8 56.9,28.2 47.2,29.3" fill="#dc4a32" stroke="#3b3a36" stroke-width="0.25"/><polygon points="56.9,8.1 61.8,7.8 62.7,10.8 57.5,11.1" fill="#dc4a32" stroke="#3b3a36" stroke-width="0.25"/><polygon points="72.7,7.6 78.1,7.4 78.6,9.8 73.2,10.0" fill="#dc4a32" stroke="#3b3a36" stroke-width="0.25"/><polygon points="82.4,7.0 87.9,6.5 88.7,9.2 83.0,9.5" fill="#dc4a32" stroke="#3b3a36" stroke-width="0.25"/><polygon points="2.7,10.8 11.9,9.8 11.9,12.5 3.3,13.0" fill="#ecd9b0" stroke="#3b3a36" stroke-width="0.25"/><polygon points="40.1,14.1 51.0,13.6 51.0,15.7 40.7,16.3" fill="#ecd9b0" stroke="#3b3a36" stroke-width="0.25"/><polygon points="42.8,20.4 52.6,19.0 52.6,22.2 43.4,23.3" fill="#ecd9b0" stroke="#3b3a36" stroke-width="0.25"/><polygon points="28.2,22.8 40.7,22.2 40.7,24.9 28.7,25.5" fill="#ecd9b0" stroke="#3b3a36" stroke-width="0.25"/><polygon points="65.6,22.6 81.3,21.7 81.3,25.5 66.2,26.0" fill="#ecd9b0" stroke="#3b3a36" stroke-width="0.25"/><polygon points="58.0,15.2 65.6,14.6 65.6,16.8 58.6,17.1" fill="#ecd9b0" stroke="#3b3a36" stroke-width="0.25"/><polygon points="19.5,9.8 26.0,9.2 26.0,13.6 20.1,13.9" fill="#ecd9b0" stroke="#3b3a36" stroke-width="0.25"/><polygon points="31.5,9.8 38.0,9.5 38.0,13.0 32.0,13.2" fill="#ecd9b0" stroke="#3b3a36" stroke-width="0.25"/><circle cx="4.9" cy="8.1" r="1.5" fill="#2e6e4e"/><circle cx="21.7" cy="7.0" r="1.5" fill="#2e6e4e"/><circle cx="29.3" cy="7.4" r="1.5" fill="#2e6e4e"/><circle cx="53.7" cy="6.5" r="1.5" fill="#2e6e4e"/><circle cx="66.2" cy="7.0" r="1.5" fill="#2e6e4e"/><circle cx="92.2" cy="8.7" r="1.5" fill="#2e6e4e"/><circle cx="96.0" cy="13.6" r="1.5" fill="#2e6e4e"/><circle cx="89.5" cy="19.0" r="1.5" fill="#2e6e4e"/><circle cx="69.4" cy="28.2" r="1.5" fill="#2e6e4e"/><circle cx="65.1" cy="28.2" r="1.5" fill="#2e6e4e"/><circle cx="59.1" cy="27.7" r="2.8" fill="#3f9a6c" stroke="#3b3a36" stroke-width="0.3"/><polygon points="6.0,29.5 20.6,29.5 20.6,34.9 6.0,34.9" fill="#e9d3a4" stroke="#3b3a36" stroke-width="0.35"/><polygon points="20.6,29.5 33.6,28.0 33.6,31.5 20.6,34.9" fill="#cdb88c" stroke="#3b3a36" stroke-width="0.35"/><polygon points="5.4,28.2 16.3,24.7 30.9,24.1 34.2,28.0 20.6,29.7" fill="#d9452f" stroke="#3b3a36" stroke-width="0.35"/><rect x="7.4" y="30.9" width="2.9" height="3.3" fill="#f4f6f8" stroke="#3b3a36" stroke-width="0.3"/><rect x="14.6" y="30.9" width="2.9" height="3.3" fill="#f4f6f8" stroke="#3b3a36" stroke-width="0.3"/><polygon points="35.2,29.5 53.7,29.5 53.7,36.7 35.2,36.0" fill="#f1e0c2" stroke="#3b3a36" stroke-width="0.35"/><polygon points="53.7,29.5 56.4,28.2 56.4,33.6 53.7,36.7" fill="#cdb88c" stroke="#3b3a36" stroke-width="0.35"/><polygon points="34.9,29.5 42.3,25.5 48.8,26.6 56.6,28.2 53.7,29.7" fill="#c9583f" stroke="#3b3a36" stroke-width="0.35"/><polygon points="45.6,23.6 55.3,22.8 56.6,28.2 48.8,26.6" fill="#dc4a32" stroke="#3b3a36" stroke-width="0.35"/><rect x="37.1" y="31.5" width="3.0" height="3.5" fill="#f4f6f8" stroke="#3b3a36" stroke-width="0.3"/><rect x="44.7" y="31.5" width="3.3" height="3.5" fill="#f4f6f8" stroke="#3b3a36" stroke-width="0.3"/><polygon points="55.9,35.6 74.8,36.0 72.7,38.2 53.1,56.4 49.3,54.8 64.0,38.2 55.9,38.0" fill="#d9c79c" stroke="#3b3a36" stroke-width="0.25"/><polygon points="54.8,38.5 64.0,38.2 55.3,46.6 51.5,46.6" fill="#a9cdb9"/><polygon points="64.0,46.6 77.0,43.4 77.5,54.2 59.7,52.1" fill="#7fb497"/><polygon points="66.2,43.4 77.0,43.4 77.0,46.6 66.2,46.6" fill="#eef0f0"/><polygon points="53.7,56.4 98.5,54.8 98.5,70.5 81.3,62.0 53.1,58.0" fill="#1f8048"/><polygon points="1.1,48.3 48.8,48.3 48.8,56.4 1.1,56.4" fill="#e7d0a2" stroke="#3b3a36" stroke-width="0.35"/><polygon points="48.8,48.3 53.7,41.2 53.7,49.9 51.0,57.5 48.8,56.4" fill="#cdb88c" stroke="#3b3a36" stroke-width="0.35"/><polygon points="6.5,36.3 49.9,36.0 54.0,41.2 46.6,48.5 0.5,47.9 0.5,44.7" fill="#db4a31" stroke="#3b3a36" stroke-width="0.35"/><polyline points="4.3,38.2 1.1,46.6" fill="none" stroke="#b53a26" stroke-width="0.35"/><polyline points="8.9,38.2 5.6,46.6" fill="none" stroke="#b53a26" stroke-width="0.35"/><polyline points="13.4,38.2 10.2,46.6" fill="none" stroke="#b53a26" stroke-width="0.35"/><polyline points="18.0,38.2 14.8,46.6" fill="none" stroke="#b53a26" stroke-width="0.35"/><polyline points="22.6,38.2 19.3,46.6" fill="none" stroke="#b53a26" stroke-width="0.35"/><polyline points="27.1,38.2 23.9,46.6" fill="none" stroke="#b53a26" stroke-width="0.35"/><polyline points="31.7,38.2 28.4,46.6" fill="none" stroke="#b53a26" stroke-width="0.35"/><polyline points="36.2,38.2 33.0,46.6" fill="none" stroke="#b53a26" stroke-width="0.35"/><polyline points="40.8,38.2 37.5,46.6" fill="none" stroke="#b53a26" stroke-width="0.35"/><polyline points="45.3,38.2 42.1,46.6" fill="none" stroke="#b53a26" stroke-width="0.35"/><rect x="4.3" y="49.3" width="5.6" height="5.4" fill="#f4f6f8" stroke="#3b3a36" stroke-width="0.3"/><rect x="29.3" y="49.3" width="4.6" height="4.9" fill="#f4f6f8" stroke="#3b3a36" stroke-width="0.3"/><rect x="36.3" y="49.3" width="4.9" height="4.9" fill="#f4f6f8" stroke="#3b3a36" stroke-width="0.3"/><rect x="11.9" y="49.9" width="11.9" height="3.3" fill="#cdb88c"/><polygon points="0.0,56.4 11.9,56.4 6.5,65.1 0.0,69.4" fill="#1f8048"/><polygon points="3.8,56.4 9.8,56.4 7.6,59.4 4.3,59.1" fill="#ecd9b0" stroke="#3b3a36" stroke-width="0.25"/><polygon points="77.5,45.0 98.5,45.0 98.5,54.2 77.5,54.2" fill="#f1dfb9" stroke="#3b3a36" stroke-width="0.35"/><polygon points="77.0,33.1 98.5,32.5 98.5,45.2 73.8,44.7" fill="#dc432d" stroke="#3b3a36" stroke-width="0.35"/><polygon points="90.0,33.1 98.5,33.1 98.5,39.0 94.4,42.3" fill="#b8402c"/><rect x="80.3" y="46.1" width="7.6" height="7.6" fill="#f4f6f8" stroke="#3b3a36" stroke-width="0.3"/><polyline points="84.1,46.1 84.1,53.7" fill="none" stroke="#3b3a36" stroke-width="0.3"/><polyline points="80.3,49.9 87.9,49.9" fill="none" stroke="#3b3a36" stroke-width="0.3"/><polygon points="11.9,54.8 51.0,59.1 81.3,62.0 73.8,74.0 1.1,74.0 1.1,69.6" fill="#d2583c" stroke="#3b3a36" stroke-width="0.35"/><polyline points="15.2,55.5 3.3,71.6" fill="none" stroke="#a8402a" stroke-width="0.4"/><polyline points="18.2,55.7 6.3,71.6" fill="none" stroke="#a8402a" stroke-width="0.4"/><polyline points="21.3,56.0 9.3,71.6" fill="none" stroke="#a8402a" stroke-width="0.4"/><polyline points="24.3,56.2 12.4,71.6" fill="none" stroke="#a8402a" stroke-width="0.4"/><polyline points="27.3,56.4 15.4,71.6" fill="none" stroke="#a8402a" stroke-width="0.4"/><polyline points="30.4,56.6 18.4,71.6" fill="none" stroke="#a8402a" stroke-width="0.4"/><polyline points="33.4,56.8 21.5,71.6" fill="none" stroke="#a8402a" stroke-width="0.4"/><polyline points="46.6,59.7 42.3,67.2" fill="none" stroke="#a8402a" stroke-width="0.35"/><polyline points="49.9,60.0 45.6,67.6" fill="none" stroke="#a8402a" stroke-width="0.35"/><polyline points="53.1,60.3 48.8,67.9" fill="none" stroke="#a8402a" stroke-width="0.35"/><polyline points="56.4,60.6 52.1,68.2" fill="none" stroke="#a8402a" stroke-width="0.35"/><polyline points="59.7,61.0 55.3,68.5" fill="none" stroke="#a8402a" stroke-width="0.35"/><polyline points="62.9,61.3 58.6,68.9" fill="none" stroke="#a8402a" stroke-width="0.35"/><polyline points="66.2,61.6 61.8,69.2" fill="none" stroke="#a8402a" stroke-width="0.35"/><polyline points="69.4,61.9 65.1,69.5" fill="none" stroke="#a8402a" stroke-width="0.35"/><polygon points="81.3,62.0 97.1,70.7 92.7,74.0 73.8,74.0" fill="#d9bd8c" stroke="#3b3a36" stroke-width="0.35"/><polyline points="81.3,62.0 77.0,74.0" fill="none" stroke="#8a4a30" stroke-width="0.5"/><rect x="51.0" y="54.8" width="2.7" height="4.9" fill="#c9583f" stroke="#3b3a36" stroke-width="0.25"/></svg></div>
  <div class="rad" style="left:423.8px;top:504.0px"></div>
  <div class="rl" style="left:443.8px;top:506.8px">Geländekategorie 3</div>
  <div class="rd" style="left:424.3px;top:527.5px">Gebiet mit regelmäßigem Bewuchs oder<br>Gebäuden oder mit isolierten Hindernissen<br>mit Abständen von höchstens 20<br>Hindernishöhen (wie Dörfer, vorstädtisches<br>Gelände, Dauerwald).</div>
  <div class="timg" style="left:27px;top:583px"><svg width="99" height="74.5" viewBox="0 0 98.7 74.5" preserveAspectRatio="none"><defs><pattern id="w4" width="2.2" height="2.6" patternUnits="userSpaceOnUse" patternTransform="rotate(-14)"><rect x="0.5" y="0.6" width="0.9" height="1.3" fill="#5a4630"/></pattern><pattern id="r4" width="1.6" height="1.6" patternUnits="userSpaceOnUse" patternTransform="rotate(38)"><rect x="0" y="0" width="0.45" height="1.6" fill="#8f2414" opacity="0.75"/></pattern></defs><rect x="0.0" y="0.0" width="98.7" height="74.8" fill="#9ba1a5"/><polygon points="0.0,49.3 6.7,51.5 1.3,58.0 0.0,58.0" fill="#e6e4da"/><polygon points="28.4,51.5 43.6,48.3 45.8,51.5 31.7,55.9" fill="#e6e4da"/><polygon points="10.0,71.0 23.0,70.0 27.3,74.8 10.0,74.8" fill="#e6e4da"/><polygon points="90.2,45.0 98.7,47.2 98.7,51.5 92.4,49.3" fill="#e6e4da"/><polygon points="34.9,18.4 41.4,16.8 43.6,22.2 38.2,24.4" fill="#eee5cc"/><polygon points="12.1,34.2 16.5,33.1 17.6,38.5 13.2,38.5" fill="#eee5cc"/><polygon points="27.3,1.1 41.4,0.5 41.4,8.1 29.5,8.7" fill="#7b7f84" stroke="#3b3a36" stroke-width="0.25"/><polygon points="69.1,0.5 80.5,0.5 79.4,9.2 69.6,8.1" fill="#6f7378" stroke="#3b3a36" stroke-width="0.25"/><polygon points="64.2,0.5 69.1,0.5 69.6,6.0 64.8,6.0" fill="#cfd2d4"/><polygon points="90.2,0.0 94.6,0.0 95.1,4.9 90.8,5.4" fill="#cfd2d4"/><polygon points="15.9,26.8 27.3,24.2 35.1,30.0 23.5,36.1" fill="#a9d5c0" stroke="#3b3a36" stroke-width="0.25"/><polygon points="21.9,24.9 27.3,23.5 32.8,29.6 26.8,30.4 25.2,27.1" fill="#e9cf9a" stroke="#3b3a36" stroke-width="0.2"/><polygon points="53.4,31.1 69.6,24.9 78.5,30.4 59.9,36.1" fill="#a9d5c0" stroke="#3b3a36" stroke-width="0.25"/><polygon points="38.2,50.7 45.8,49.0 59.9,60.4 52.3,64.8" fill="#a9d5c0" stroke="#3b3a36" stroke-width="0.25"/><polygon points="64.2,22.2 72.9,20.6 81.6,26.6 75.1,28.2" fill="#b9c9b0"/><circle cx="61.0" cy="30.7" r="1.8" fill="#8a7a5a" stroke="#3b3a36" stroke-width="0.3"/><circle cx="69.6" cy="22.2" r="1.5" fill="#2f8a5a"/><circle cx="77.8" cy="24.9" r="1.3" fill="#2f8a5a"/><circle cx="25.7" cy="21.1" r="1.2" fill="#2f8a5a"/><circle cx="32.2" cy="52.8" r="1.4" fill="#2f8a5a"/><circle cx="51.2" cy="66.2" r="1.1" fill="#2f8a5a"/><polygon points="48.5,32.0 52.3,30.9 55.5,34.2 51.2,35.8" fill="#e9cf9a" stroke="#3b3a36" stroke-width="0.2"/><polygon points="5.6,11.4 12.7,7.0 12.7,15.7 5.6,18.4" fill="#ecca90" stroke="#3b3a36" stroke-width="0.3"/><polygon points="5.6,11.4 12.7,7.0 12.7,15.7 5.6,18.4" fill="url(#w4)"/><polygon points="0.8,2.7 11.1,0.5 12.7,7.0 1.3,10.3" fill="#de472b" stroke="#3b3a36" stroke-width="0.3"/><polygon points="0.8,2.7 11.1,0.5 12.7,7.0 1.3,10.3" fill="url(#r4)"/><polygon points="12.7,8.7 24.1,7.0 24.1,13.6 13.2,15.7" fill="#ecca90" stroke="#3b3a36" stroke-width="0.3"/><polygon points="12.7,8.7 24.1,7.0 24.1,13.6 13.2,15.7" fill="url(#w4)"/><polygon points="11.1,1.1 23.5,0.5 24.1,7.0 12.7,8.7" fill="#de472b" stroke="#3b3a36" stroke-width="0.3"/><polygon points="11.1,1.1 23.5,0.5 24.1,7.0 12.7,8.7" fill="url(#r4)"/><polygon points="0.0,8.1 5.6,7.0 5.6,16.8 0.0,14.6" fill="#6f5a48"/><polygon points="5.6,14.1 8.9,14.1 8.9,18.4 5.6,18.4" fill="#ecca90" stroke="#3b3a36" stroke-width="0.3"/><polygon points="5.6,14.1 8.9,14.1 8.9,18.4 5.6,18.4" fill="url(#w4)"/><polygon points="7.8,10.3 21.9,7.6 23.2,11.4 8.9,14.1" fill="#de472b" stroke="#3b3a36" stroke-width="0.3"/><polygon points="7.8,10.3 21.9,7.6 23.2,11.4 8.9,14.1" fill="url(#r4)"/><polygon points="24.1,12.5 29.5,14.6 29.5,18.4 26.2,17.4" fill="#ecca90" stroke="#3b3a36" stroke-width="0.3"/><polygon points="24.1,12.5 29.5,14.6 29.5,18.4 26.2,17.4" fill="url(#w4)"/><polygon points="24.6,8.1 28.4,7.3 29.5,14.6 25.2,13.6" fill="#de472b" stroke="#3b3a36" stroke-width="0.3"/><polygon points="24.6,8.1 28.4,7.3 29.5,14.6 25.2,13.6" fill="url(#r4)"/><polygon points="29.7,14.9 42.1,11.6 42.1,15.9 29.7,18.5" fill="#ecca90" stroke="#3b3a36" stroke-width="0.3"/><polygon points="29.7,14.9 42.1,11.6 42.1,15.9 29.7,18.5" fill="url(#w4)"/><polygon points="29.3,9.8 40.6,6.5 42.1,11.6 29.7,14.9" fill="#de472b" stroke="#3b3a36" stroke-width="0.3"/><polygon points="29.3,9.8 40.6,6.5 42.1,11.6 29.7,14.9" fill="url(#r4)"/><polygon points="41.4,6.0 51.2,6.0 51.2,12.5 41.4,13.0" fill="#ecca90" stroke="#3b3a36" stroke-width="0.3"/><polygon points="41.4,6.0 51.2,6.0 51.2,12.5 41.4,13.0" fill="url(#w4)"/><polygon points="41.4,2.2 51.2,1.1 51.7,6.0 42.0,6.5" fill="#de472b" stroke="#3b3a36" stroke-width="0.3"/><polygon points="41.4,2.2 51.2,1.1 51.7,6.0 42.0,6.5" fill="url(#r4)"/><polygon points="41.4,6.0 46.9,6.0 46.9,13.0 41.4,13.0" fill="#8f8474"/><polygon points="51.2,6.0 59.9,5.4 59.9,11.4 51.2,11.4" fill="#ecca90" stroke="#3b3a36" stroke-width="0.3"/><polygon points="51.2,6.0 59.9,5.4 59.9,11.4 51.2,11.4" fill="url(#w4)"/><polygon points="51.7,1.6 63.1,1.1 62.6,5.4 52.3,6.0" fill="#de472b" stroke="#3b3a36" stroke-width="0.3"/><polygon points="51.7,1.6 63.1,1.1 62.6,5.4 52.3,6.0" fill="url(#r4)"/><polygon points="51.2,7.0 59.9,8.1 58.8,11.4 50.7,10.3" fill="#de472b" stroke="#3b3a36" stroke-width="0.3"/><polygon points="51.2,7.0 59.9,8.1 58.8,11.4 50.7,10.3" fill="url(#r4)"/><polygon points="60.4,11.4 76.1,14.6 75.6,19.0 61.0,16.3" fill="#ecca90" stroke="#3b3a36" stroke-width="0.3"/><polygon points="60.4,11.4 76.1,14.6 75.6,19.0 61.0,16.3" fill="url(#w4)"/><polygon points="61.0,6.5 77.2,9.2 76.1,14.6 60.4,11.4" fill="#de472b" stroke="#3b3a36" stroke-width="0.3"/><polygon points="61.0,6.5 77.2,9.2 76.1,14.6 60.4,11.4" fill="url(#r4)"/><polygon points="76.1,15.2 84.8,16.8 84.8,22.8 76.7,21.7" fill="#ecca90" stroke="#3b3a36" stroke-width="0.3"/><polygon points="76.1,15.2 84.8,16.8 84.8,22.8 76.7,21.7" fill="url(#w4)"/><polygon points="80.5,4.9 88.1,1.1 98.7,1.6 98.7,9.2 87.0,16.8 83.2,11.4" fill="#de472b" stroke="#3b3a36" stroke-width="0.3"/><polygon points="80.5,4.9 88.1,1.1 98.7,1.6 98.7,9.2 87.0,16.8 83.2,11.4" fill="url(#r4)"/><polygon points="77.2,11.4 83.7,10.3 85.4,16.8 78.3,16.8" fill="#c9553f" stroke="#3b3a36" stroke-width="0.3"/><polygon points="77.2,11.4 83.7,10.3 85.4,16.8 78.3,16.8" fill="url(#r4)"/><polygon points="92.4,22.2 98.7,21.7 98.7,26.6 93.0,26.6" fill="#ecca90" stroke="#3b3a36" stroke-width="0.3"/><polygon points="92.4,22.2 98.7,21.7 98.7,26.6 93.0,26.6" fill="url(#w4)"/><polygon points="90.2,16.8 98.7,15.7 98.7,22.2 92.4,23.3" fill="#de472b" stroke="#3b3a36" stroke-width="0.3"/><polygon points="90.2,16.8 98.7,15.7 98.7,22.2 92.4,23.3" fill="url(#r4)"/><polygon points="42.5,14.6 49.0,12.5 51.2,16.3 44.7,18.4" fill="#b93a24" stroke="#3b3a36" stroke-width="0.3"/><polygon points="42.5,14.6 49.0,12.5 51.2,16.3 44.7,18.4" fill="url(#r4)"/><polygon points="45.8,24.4 63.3,18.4 63.3,25.7 46.6,30.0" fill="#a9a091" stroke="#3b3a36" stroke-width="0.25"/><polygon points="41.4,22.2 45.8,24.4 46.6,30.0 42.5,27.7" fill="#ecca90" stroke="#3b3a36" stroke-width="0.25"/><polygon points="43.1,18.4 61.2,14.6 63.3,18.4 45.8,24.6" fill="#de472b" stroke="#3b3a36" stroke-width="0.3"/><polygon points="43.1,18.4 61.2,14.6 63.3,18.4 45.8,24.6" fill="url(#r4)"/><polygon points="2.4,21.7 6.7,24.9 6.7,27.7 2.9,26.6" fill="#ecca90" stroke="#3b3a36" stroke-width="0.3"/><polygon points="2.4,21.7 6.7,24.9 6.7,27.7 2.9,26.6" fill="url(#w4)"/><polygon points="3.5,20.6 23.2,14.9 25.2,18.4 6.7,24.9" fill="#de472b" stroke="#3b3a36" stroke-width="0.3"/><polygon points="3.5,20.6 23.2,14.9 25.2,18.4 6.7,24.9" fill="url(#r4)"/><polygon points="5.6,27.7 11.1,32.0 11.1,34.2 5.6,30.9" fill="#ecca90" stroke="#3b3a36" stroke-width="0.3"/><polygon points="5.6,27.7 11.1,32.0 11.1,34.2 5.6,30.9" fill="url(#w4)"/><polygon points="5.6,23.9 12.1,22.8 16.5,29.8 11.1,32.0" fill="#de472b" stroke="#3b3a36" stroke-width="0.3"/><polygon points="5.6,23.9 12.1,22.8 16.5,29.8 11.1,32.0" fill="url(#r4)"/><polygon points="35.5,24.9 39.3,24.2 44.7,30.0 40.3,31.5" fill="#de472b" stroke="#3b3a36" stroke-width="0.3"/><polygon points="35.5,24.9 39.3,24.2 44.7,30.0 40.3,31.5" fill="url(#r4)"/><polygon points="20.8,39.8 45.3,33.3 45.3,40.9 22.1,48.5" fill="#ecca90" stroke="#3b3a36" stroke-width="0.3"/><polygon points="20.8,39.8 45.3,33.3 45.3,40.9 22.1,48.5" fill="url(#w4)"/><polygon points="15.9,34.4 20.8,39.8 22.1,48.5 16.5,41.8" fill="#c9a873" stroke="#3b3a36" stroke-width="0.3"/><polygon points="15.9,34.4 20.8,39.8 22.1,48.5 16.5,41.8" fill="url(#w4)"/><polygon points="15.9,34.4 43.8,28.7 45.3,33.3 20.8,39.8" fill="#de472b" stroke="#3b3a36" stroke-width="0.3"/><polygon points="15.9,34.4 43.8,28.7 45.3,33.3 20.8,39.8" fill="url(#r4)"/><polyline points="23.2,41.2 23.9,46.1" fill="none" stroke="#8a7450" stroke-width="0.3"/><polyline points="25.8,40.5 26.5,45.3" fill="none" stroke="#8a7450" stroke-width="0.3"/><polyline points="28.4,39.7 29.1,44.6" fill="none" stroke="#8a7450" stroke-width="0.3"/><polyline points="31.0,38.9 31.7,43.8" fill="none" stroke="#8a7450" stroke-width="0.3"/><polyline points="33.6,38.2 34.3,43.1" fill="none" stroke="#8a7450" stroke-width="0.3"/><polyline points="36.2,37.4 36.9,42.3" fill="none" stroke="#8a7450" stroke-width="0.3"/><polyline points="38.8,36.7 39.5,41.5" fill="none" stroke="#8a7450" stroke-width="0.3"/><polyline points="41.4,35.9 42.1,40.8" fill="none" stroke="#8a7450" stroke-width="0.3"/><polyline points="44.0,35.1 44.7,40.0" fill="none" stroke="#8a7450" stroke-width="0.3"/><polygon points="85.4,26.6 93.0,34.7 95.7,39.0 98.7,39.0 98.7,31.5" fill="#ecca90" stroke="#3b3a36" stroke-width="0.3"/><polygon points="85.4,26.6 93.0,34.7 95.7,39.0 98.7,39.0 98.7,31.5" fill="url(#w4)"/><polygon points="85.4,21.1 92.4,16.8 98.7,27.7 98.7,31.5 93.0,34.7" fill="#de472b" stroke="#3b3a36" stroke-width="0.3"/><polygon points="85.4,21.1 92.4,16.8 98.7,27.7 98.7,31.5 93.0,34.7" fill="url(#r4)"/><polygon points="85.4,22.2 93.0,34.7 95.7,39.0 87.0,30.9" fill="#ecca90" stroke="#3b3a36" stroke-width="0.25"/><polygon points="90.2,16.3 98.7,15.7 98.7,20.1 94.6,22.2" fill="#b93a24" stroke="#3b3a36" stroke-width="0.3"/><polygon points="90.2,16.3 98.7,15.7 98.7,20.1 94.6,22.2" fill="url(#r4)"/><polygon points="58.8,40.9 73.1,36.6 73.1,40.7 59.9,44.1" fill="#ecca90" stroke="#3b3a36" stroke-width="0.3"/><polygon points="58.8,40.9 73.1,36.6 73.1,40.7 59.9,44.1" fill="url(#w4)"/><polygon points="55.5,36.6 70.7,32.0 73.1,36.6 58.8,40.9" fill="#de472b" stroke="#3b3a36" stroke-width="0.3"/><polygon points="55.5,36.6 70.7,32.0 73.1,36.6 58.8,40.9" fill="url(#r4)"/><polygon points="69.6,30.9 80.5,29.8 84.8,35.2 75.1,38.5" fill="#c9553f" stroke="#3b3a36" stroke-width="0.3"/><polygon points="69.6,30.9 80.5,29.8 84.8,35.2 75.1,38.5" fill="url(#r4)"/><polygon points="45.8,42.8 55.5,56.1 55.5,62.6 45.8,49.6" fill="#ecca90" stroke="#3b3a36" stroke-width="0.3"/><polygon points="45.8,42.8 55.5,56.1 55.5,62.6 45.8,49.6" fill="url(#w4)"/><polygon points="55.5,56.1 66.6,51.5 66.6,58.0 62.0,62.6 55.5,62.6" fill="#c9a873" stroke="#3b3a36" stroke-width="0.3"/><polygon points="55.5,56.1 66.6,51.5 66.6,58.0 62.0,62.6 55.5,62.6" fill="url(#w4)"/><polygon points="45.8,42.8 54.7,37.4 66.6,51.5 55.5,56.1" fill="#de472b" stroke="#3b3a36" stroke-width="0.3"/><polygon points="45.8,42.8 54.7,37.4 66.6,51.5 55.5,56.1" fill="url(#r4)"/><polygon points="56.6,41.8 64.2,49.3 59.9,51.5 51.2,43.9" fill="#b93a24"/><polygon points="74.0,52.8 90.9,48.5 90.9,55.9 75.3,59.3" fill="#ecca90" stroke="#3b3a36" stroke-width="0.3"/><polygon points="74.0,52.8 90.9,48.5 90.9,55.9 75.3,59.3" fill="url(#w4)"/><polygon points="66.4,46.1 70.7,46.3 75.3,59.3 69.6,60.2 66.6,51.5" fill="#c9a873" stroke="#3b3a36" stroke-width="0.3"/><polygon points="66.4,46.1 70.7,46.3 75.3,59.3 69.6,60.2 66.6,51.5" fill="url(#w4)"/><polygon points="70.7,46.3 89.4,42.8 90.9,48.5 74.0,52.8" fill="#de472b" stroke="#3b3a36" stroke-width="0.3"/><polygon points="70.7,46.3 89.4,42.8 90.9,48.5 74.0,52.8" fill="url(#r4)"/><polygon points="70.7,38.0 77.2,38.5 81.6,43.9 72.9,46.1" fill="#b8604a" stroke="#3b3a36" stroke-width="0.3"/><polygon points="70.7,38.0 77.2,38.5 81.6,43.9 72.9,46.1" fill="url(#r4)"/><polygon points="77.2,38.5 87.0,38.0 89.2,42.8 81.6,43.9" fill="#e9cf9a" stroke="#3b3a36" stroke-width="0.2"/><polygon points="61.0,42.8 68.5,40.7 70.7,46.1 66.4,49.3" fill="#eee9dc"/><circle cx="68.3" cy="45.9" r="1.6" fill="#de472b" stroke="#3b3a36" stroke-width="0.3"/><rect x="66.8" y="46.1" width="3.0" height="9.8" fill="#ecca90" stroke="#3b3a36" stroke-width="0.25"/><polygon points="10.0,43.1 15.6,40.7 15.6,49.3 10.0,51.7" fill="#ecca90" stroke="#3b3a36" stroke-width="0.3"/><polygon points="10.0,43.1 15.6,40.7 15.6,49.3 10.0,51.7" fill="url(#w4)"/><polygon points="0.8,38.5 10.0,43.1 10.0,51.7 0.8,46.1" fill="#c9a873" stroke="#3b3a36" stroke-width="0.3"/><polygon points="0.8,38.5 10.0,43.1 10.0,51.7 0.8,46.1" fill="url(#w4)"/><polygon points="0.8,32.5 6.9,32.0 15.6,40.7 10.0,43.1" fill="#de472b" stroke="#3b3a36" stroke-width="0.3"/><polygon points="0.8,32.5 6.9,32.0 15.6,40.7 10.0,43.1" fill="url(#r4)"/><polygon points="0.0,32.5 1.3,32.5 1.3,42.8 0.0,42.8" fill="#c9a873"/><polygon points="0.0,62.9 5.1,65.1 12.1,62.9 12.1,70.0 0.0,71.0" fill="#ecca90" stroke="#3b3a36" stroke-width="0.3"/><polygon points="0.0,62.9 5.1,65.1 12.1,62.9 12.1,70.0 0.0,71.0" fill="url(#w4)"/><polygon points="0.2,58.6 6.7,58.0 12.1,62.9 5.1,65.1" fill="#de472b" stroke="#3b3a36" stroke-width="0.3"/><polygon points="0.2,58.6 6.7,58.0 12.1,62.9 5.1,65.1" fill="url(#r4)"/><polygon points="13.2,59.7 18.9,59.1 18.9,67.2 13.4,66.7" fill="#ecca90" stroke="#3b3a36" stroke-width="0.3"/><polygon points="13.2,59.7 18.9,59.1 18.9,67.2 13.4,66.7" fill="url(#w4)"/><polygon points="12.7,55.3 17.0,54.8 18.7,59.1 13.8,59.7" fill="#de472b" stroke="#3b3a36" stroke-width="0.3"/><polygon points="12.7,55.3 17.0,54.8 18.7,59.1 13.8,59.7" fill="url(#r4)"/><polygon points="0.0,65.6 6.7,68.9 11.1,73.2 0.0,74.8" fill="#b93a24" stroke="#3b3a36" stroke-width="0.3"/><polygon points="0.0,65.6 6.7,68.9 11.1,73.2 0.0,74.8" fill="url(#r4)"/><polygon points="20.8,57.5 32.2,66.2 32.2,71.0 20.8,62.4" fill="#ecca90" stroke="#3b3a36" stroke-width="0.3"/><polygon points="20.8,57.5 32.2,66.2 32.2,71.0 20.8,62.4" fill="url(#w4)"/><polygon points="21.4,51.5 26.2,52.1 37.6,64.5 32.2,66.2" fill="#de472b" stroke="#3b3a36" stroke-width="0.3"/><polygon points="21.4,51.5 26.2,52.1 37.6,64.5 32.2,66.2" fill="url(#r4)"/><polygon points="20.0,64.5 26.2,64.5 26.2,71.6 20.3,71.0" fill="#ecca90" stroke="#3b3a36" stroke-width="0.3"/><polygon points="20.0,64.5 26.2,64.5 26.2,71.6 20.3,71.0" fill="url(#w4)"/><polygon points="20.3,60.7 25.7,60.2 26.2,64.5 20.8,64.5" fill="#de472b" stroke="#3b3a36" stroke-width="0.3"/><polygon points="20.3,60.7 25.7,60.2 26.2,64.5 20.8,64.5" fill="url(#r4)"/><polygon points="32.2,66.2 37.6,64.5 38.2,71.0 32.8,72.7" fill="#b93a24" stroke="#3b3a36" stroke-width="0.3"/><polygon points="32.2,66.2 37.6,64.5 38.2,71.0 32.8,72.7" fill="url(#r4)"/><polygon points="27.3,68.9 38.2,70.0 38.7,74.5 28.4,74.5" fill="#ecca90" stroke="#3b3a36" stroke-width="0.25"/><polygon points="36.6,58.2 42.7,59.3 42.7,65.6 36.9,62.9" fill="#ecca90" stroke="#3b3a36" stroke-width="0.3"/><polygon points="36.6,58.2 42.7,59.3 42.7,65.6 36.9,62.9" fill="url(#w4)"/><polygon points="42.7,59.3 50.3,60.4 50.3,69.1 42.7,65.6" fill="#c9a873" stroke="#3b3a36" stroke-width="0.3"/><polygon points="42.7,59.3 50.3,60.4 50.3,69.1 42.7,65.6" fill="url(#w4)"/><polygon points="36.0,51.7 41.6,52.8 50.3,60.4 42.7,59.3" fill="#de472b" stroke="#3b3a36" stroke-width="0.3"/><polygon points="36.0,51.7 41.6,52.8 50.3,60.4 42.7,59.3" fill="url(#r4)"/><polygon points="51.2,70.2 81.6,58.2 91.5,70.2 88.1,74.8 51.2,74.8" fill="#de472b" stroke="#3b3a36" stroke-width="0.3"/><polygon points="51.2,70.2 81.6,58.2 91.5,70.2 88.1,74.8 51.2,74.8" fill="url(#r4)"/><polygon points="64.2,64.5 81.6,58.2 91.5,70.2 77.2,70.0" fill="#e8533a"/><polygon points="61.0,71.0 88.1,70.0 87.0,74.8 61.2,74.8" fill="#ecca90" stroke="#3b3a36" stroke-width="0.25"/><rect x="63.7" y="71.6" width="2.2" height="2.2" fill="#8a7a5a"/><rect x="67.6" y="71.6" width="2.2" height="2.2" fill="#8a7a5a"/><rect x="71.5" y="71.6" width="2.2" height="2.2" fill="#8a7a5a"/><rect x="75.4" y="71.6" width="2.2" height="2.2" fill="#8a7a5a"/><rect x="79.3" y="71.6" width="2.2" height="2.2" fill="#8a7a5a"/><rect x="83.2" y="71.6" width="2.2" height="2.2" fill="#8a7a5a"/><polygon points="90.9,59.7 98.7,59.1 98.7,68.9 91.5,66.9" fill="#ecca90" stroke="#3b3a36" stroke-width="0.3"/><polygon points="90.9,59.7 98.7,59.1 98.7,68.9 91.5,66.9" fill="url(#w4)"/><polygon points="90.2,51.5 98.7,50.4 98.7,59.1 91.5,60.4" fill="#b04a36" stroke="#3b3a36" stroke-width="0.3"/><polygon points="90.2,51.5 98.7,50.4 98.7,59.1 91.5,60.4" fill="url(#r4)"/></svg></div>
  <div class="rad on" style="left:136.8px;top:583.3px"></div>
  <div class="rl" style="left:156.8px;top:586.1px">Geländekategorie 4</div>
  <div class="rd" style="left:137.3px;top:606.8px">Gebiet, in dem mindestens 15 % der Fläche<br>mit Gebäuden bedeckt sind und deren<br>durchschnittliche Höhe mehr als 15 m<br>beträgt.</div>
  <div class="btn" style="left:871px">ZURÜCK</div>
  <div class="btn" style="left:949.1px">WEITER</div>
</div>
</body>
</html>
